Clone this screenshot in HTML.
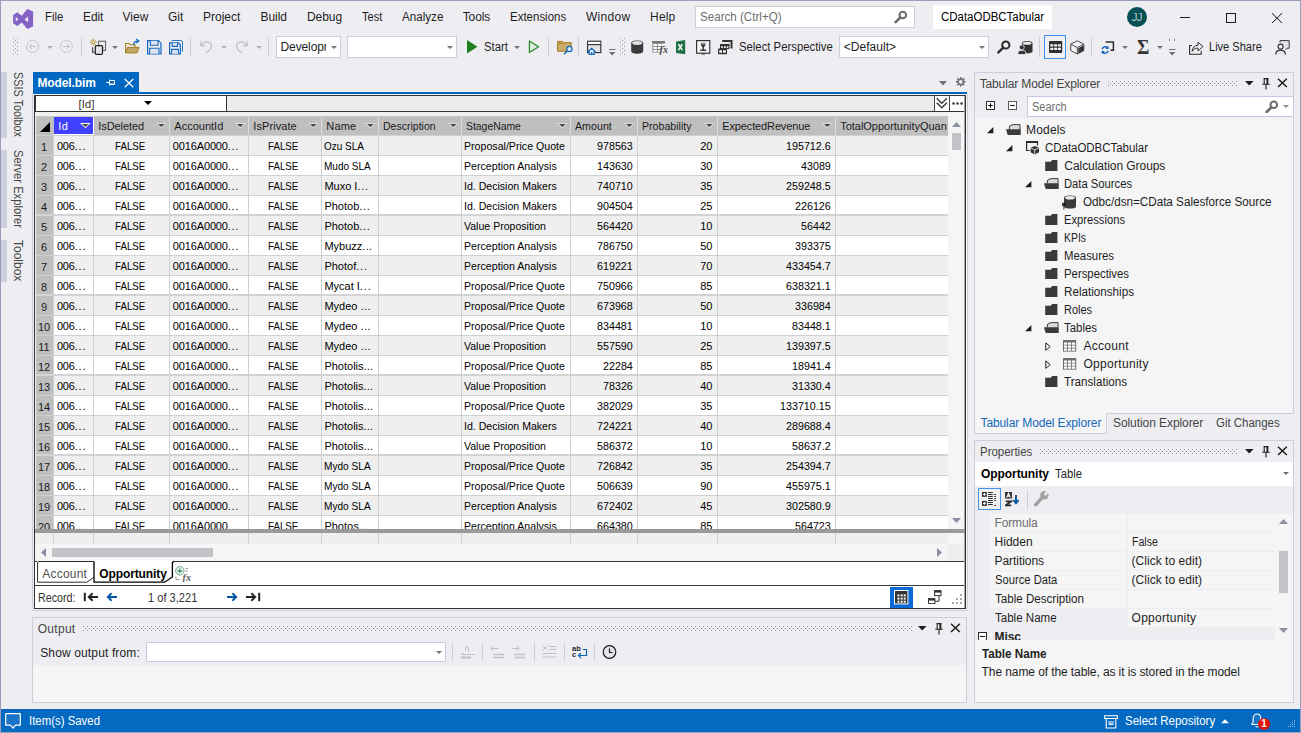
<!DOCTYPE html>
<html lang="en"><head><meta charset="utf-8"><title>Model.bim - CDataODBCTabular</title>
<style>
html,body{margin:0;padding:0;background:#eeeef2}
body{width:1301px;height:733px;overflow:hidden;background:#eeeef2;font-family:"Liberation Sans",sans-serif;font-size:12px;color:#1e1e1e;position:relative}
body div,body svg{position:absolute;box-sizing:border-box}
.t{white-space:pre;font-size:12px;letter-spacing:-0.1px}
.g{white-space:pre;font-size:11px;color:#000}
.grip{background-image:radial-gradient(circle at 0.5px 0.5px,#999 0.6px,transparent 0.7px),radial-gradient(circle at 2.5px 2.5px,#999 0.6px,transparent 0.7px);background-size:4px 4px;}
</style></head>
<body>
<div style="left:0px;top:0px;width:1301px;height:733px;border:1px solid #9b9fb9;pointer-events:none;z-index:50"></div>
<svg style="left:13px;top:9px;" width="21" height="20" viewBox="0 0 21 20"><path d="M14.300 .1 20.100 2.500V17.500L14.300 20 8.800 13.600 4.300 17.100 .1 14.300V6L4.300 3.200 8.800 6.800ZM2.800 8.100V12.500L5.500 10.300ZM15.100 7.500 11.600 10.400 15.100 13.300Z" fill="#8661c5" fill-rule="evenodd"/></svg>
<div class="t" style="left:45.10px;top:9px;height:16px;line-height:16px;letter-spacing:0;transform:scaleX(0.9409);transform-origin:0 0;">File</div>
<div class="t" style="left:83.10px;top:9px;height:16px;line-height:16px;letter-spacing:-0.162px;">Edit</div>
<div class="t" style="left:122.50px;top:9px;height:16px;line-height:16px;letter-spacing:0.001px;">View</div>
<div class="t" style="left:168.10px;top:9px;height:16px;line-height:16px;letter-spacing:-0.072px;">Git</div>
<div class="t" style="left:203.10px;top:9px;height:16px;line-height:16px;letter-spacing:-0.027px;">Project</div>
<div class="t" style="left:260.50px;top:9px;height:16px;line-height:16px;letter-spacing:-0.072px;">Build</div>
<div class="t" style="left:306.90px;top:9px;height:16px;line-height:16px;letter-spacing:-0.044px;">Debug</div>
<div class="t" style="left:362.10px;top:9px;height:16px;line-height:16px;letter-spacing:0;transform:scaleX(0.9175);transform-origin:0 0;">Test</div>
<div class="t" style="left:401.90px;top:9px;height:16px;line-height:16px;letter-spacing:0;transform:scaleX(0.9695);transform-origin:0 0;">Analyze</div>
<div class="t" style="left:462.70px;top:9px;height:16px;line-height:16px;letter-spacing:-0.104px;">Tools</div>
<div class="t" style="left:510.10px;top:9px;height:16px;line-height:16px;letter-spacing:0;transform:scaleX(0.9574);transform-origin:0 0;">Extensions</div>
<div class="t" style="left:585.90px;top:9px;height:16px;line-height:16px;letter-spacing:0.342px;">Window</div>
<div class="t" style="left:650.10px;top:9px;height:16px;line-height:16px;letter-spacing:0.171px;">Help</div>
<div style="left:695px;top:6px;width:220px;height:22px;background:#fff;border:1px solid #cccedb"></div>
<div class="t" style="left:700.40px;top:9px;height:16px;line-height:16px;letter-spacing:0;transform:scaleX(0.9673);transform-origin:0 0;color:#6d6d6d">Search (Ctrl+Q)</div>
<svg style="left:894px;top:10px;" width="14" height="14" viewBox="0 0 14 14"><circle cx="8.800" cy="5" r="3.300" fill="none" stroke="#6b6b6b" stroke-width="2"/><path d="M6.200 7.600 1.600 12.200" stroke="#6b6b6b" stroke-width="2.600" stroke-linecap="round"/></svg>
<div style="left:933px;top:5px;width:119px;height:24px;background:#fff"></div>
<div class="t" style="left:940.80px;top:9px;height:16px;line-height:16px;letter-spacing:0;transform:scaleX(0.9551);transform-origin:0 0;color:#000">CDataODBCTabular</div>
<div style="left:1127px;top:7px;width:20px;height:20px;background:#064f54;border-radius:50%"></div>
<div class="t" style="left:1131.800px;top:9px;height:16px;line-height:16px;font-size:11.500px;color:#b4c9ca;letter-spacing:-0.700px">JJ</div>
<svg style="left:1179px;top:12px;" width="12" height="12" viewBox="0 0 12 12"><path d="M1 5.5H11" stroke="#1a1a1a" stroke-width="1"/></svg>
<svg style="left:1225px;top:12px;" width="12" height="12" viewBox="0 0 12 12"><rect x="1.5" y="1.5" width="9" height="9" fill="none" stroke="#1a1a1a" stroke-width="1"/></svg>
<svg style="left:1271px;top:12px;" width="12" height="12" viewBox="0 0 12 12"><path d="M1 1.2 11 11M11 1.2 1 11" stroke="#1a1a1a" stroke-width="1"/></svg>
<div class="grip" style="left:13px;top:38px;width:5px;height:18px;"></div>
<svg style="left:26px;top:40px;" width="14" height="14" viewBox="0 0 14 14"><circle cx="6.600" cy="6.500" r="6" fill="none" stroke="#c3c3cb" stroke-width="1"/><path d="M9.800 6.500H3.600M6.100 3.900 3.500 6.500l2.600 2.600" fill="none" stroke="#c3c3cb" stroke-width="1"/></svg>
<svg style="left:47px;top:46px;" width="6" height="3" viewBox="0 0 6 3"><path d="M0 0H6L3.0 3Z" fill="#b0b0b8"/></svg>
<svg style="left:60px;top:40px;" width="14" height="14" viewBox="0 0 14 14"><circle cx="6.400" cy="6.500" r="6" fill="none" stroke="#c3c3cb" stroke-width="1"/><path d="M3.200 6.500h6.200M6.900 3.900 9.500 6.500 6.900 9.100" fill="none" stroke="#c3c3cb" stroke-width="1"/></svg>
<div style="left:81px;top:37px;width:1px;height:20px;background:#cccedb"></div>
<svg style="left:90px;top:38px;" width="17" height="17" viewBox="0 0 17 17"><path d="M2.600 9.200V14.300H5.200" fill="none" stroke="#3a3a3a" stroke-width="1.100"/><rect x="8.600" y="3.200" width="7" height="9.200" fill="#ececf0" stroke="#5a5a5a" stroke-width="1"/><rect x="10.500" y="7.500" width="3.500" height="3.500" fill="#cfcfd4"/><rect x="5.300" y="7.600" width="7.200" height="8.800" rx="1.200" fill="#e2e2e6" stroke="#1e1e1e" stroke-width="1.200"/><path d="M3.400 .8V7.800M-.1 4.300H6.900M.9 1.800 5.900 6.800M5.900 1.800 .9 6.800" stroke="#b58b18" stroke-width=".9"/><circle cx="3.400" cy="4.300" r="1.100" fill="#eeeef2"/></svg>
<svg style="left:112px;top:46px;" width="6" height="3" viewBox="0 0 6 3"><path d="M0 0H6L3.0 3Z" fill="#717171"/></svg>
<svg style="left:125px;top:38px;" width="16" height="16" viewBox="0 0 16 16"><path d="M.6 14.800V5.500H4.200L5.400 6.800H10V9" fill="none" stroke="#a47d18" stroke-width="1.100"/><path d="M.7 14.900 2.400 9.400H14.200L11.800 14.900Z" fill="#c3a669" stroke="#a47d18" stroke-width="1"/><path d="M8.600 7.400C8.800 4.600 10.200 3 13 2.900" fill="none" stroke="#1667c0" stroke-width="1.300"/><path d="M11.300 .9 13.800 2.900 11.300 5" fill="none" stroke="#1667c0" stroke-width="1.300"/></svg>
<svg style="left:147px;top:40px;" width="15" height="15" viewBox="0 0 15 15"><path d="M.6 .6H11.400L14 3.200V13.800H.6Z" fill="none" stroke="#1467c1" stroke-width="1.200"/><path d="M3.400 .8V5.200H11V.8" fill="#dde4ef" stroke="#1467c1" stroke-width="1.100"/><path d="M2.600 13.700V8.300H12V13.700" fill="#dde4ef" stroke="#1467c1" stroke-width="1.100"/></svg>
<svg style="left:169px;top:40px;" width="15" height="15" viewBox="0 0 15 15"><path d="M2.600 .5H11.500Q13.500 .5 13.500 2.500V11.800" fill="none" stroke="#1467c1" stroke-width=".9"/><path d="M.6 2.800H9.400L11.400 4.800V13.800H.6Z" fill="none" stroke="#1467c1" stroke-width="1.200"/><path d="M3.200 3V6.400H8.600V3" fill="#dde4ef" stroke="#1467c1" stroke-width="1.100"/><path d="M2.600 13.700V9.400H9.400V13.700" fill="#dde4ef" stroke="#1467c1" stroke-width="1.100"/></svg>
<div style="left:190px;top:37px;width:1px;height:20px;background:#cccedb"></div>
<svg style="left:200px;top:40px;" width="13" height="14" viewBox="0 0 13 14"><path d="M.8 1v4.6h4.6" fill="none" stroke="#bcbcc6" stroke-width="1.1"/><path d="M1.2 5.2C3 2.2 7.4.6 10.3 3.2c2.7 2.6.6 6.6-4.4 10.2" fill="none" stroke="#bcbcc6" stroke-width="1.1"/></svg>
<svg style="left:221px;top:46px;" width="6" height="3" viewBox="0 0 6 3"><path d="M0 0H6L3.0 3Z" fill="#b0b0b8"/></svg>
<svg style="left:235px;top:40px;" width="13" height="14" viewBox="0 0 13 14"><path d="M12.2 1v4.6H7.6" fill="none" stroke="#bcbcc6" stroke-width="1.1"/><path d="M11.8 5.2C10 2.2 5.600 .6 2.7 3.2C0 5.800 2.100 9.8 7.100 13.4" fill="none" stroke="#bcbcc6" stroke-width="1.1"/></svg>
<svg style="left:256px;top:46px;" width="6" height="3" viewBox="0 0 6 3"><path d="M0 0H6L3.0 3Z" fill="#b0b0b8"/></svg>
<div style="left:268px;top:37px;width:1px;height:20px;background:#cccedb"></div>
<div style="left:276px;top:36px;width:65px;height:22px;background:#fff;border:1px solid #cccedb"></div>
<div class="t" style="left:280.5px;top:38.8px;height:16px;line-height:16px;width:45px;overflow:hidden;font-size:12px">Development</div>
<svg style="left:331px;top:46px;" width="6" height="3" viewBox="0 0 6 3"><path d="M0 0H6L3.0 3Z" fill="#717171"/></svg>
<div style="left:347px;top:36px;width:110px;height:22px;background:#fff;border:1px solid #cccedb"></div>
<svg style="left:447px;top:46px;" width="6" height="3" viewBox="0 0 6 3"><path d="M0 0H6L3.0 3Z" fill="#717171"/></svg>
<svg style="left:467px;top:40px;" width="11" height="14" viewBox="0 0 11 14"><path d="M0 0 10.5 6.7 0 13.4Z" fill="#1f801f"/></svg>
<div class="t" style="left:484.20px;top:39px;height:16px;line-height:16px;letter-spacing:0;transform:scaleX(0.9470);transform-origin:0 0;">Start</div>
<svg style="left:514px;top:46px;" width="6" height="3" viewBox="0 0 6 3"><path d="M0 0H6L3.0 3Z" fill="#717171"/></svg>
<svg style="left:528px;top:40px;" width="12" height="14" viewBox="0 0 12 14"><path d="M1.400 .9 10.600 6.700 1.400 12.500Z" fill="#dfe9df" stroke="#228a22" stroke-width="1.200" stroke-linejoin="round"/></svg>
<div style="left:548px;top:37px;width:1px;height:20px;background:#cccedb"></div>
<svg style="left:557px;top:40px;" width="16" height="15" viewBox="0 0 16 15"><path d="M.6 1.400h5l1.200 1.300h7.400V11.300H.6Z" fill="#c9ab6d" stroke="#a47d18" stroke-width="1"/><path d="M.6 3.200H6.500" stroke="#a47d18" stroke-width="1"/><circle cx="12.400" cy="9" r="2.600" fill="#dfe8f4" stroke="#1667c0" stroke-width="1.200"/><path d="M10.400 11 7 14.300" stroke="#1667c0" stroke-width="1.400"/></svg>
<div style="left:578px;top:37px;width:1px;height:20px;background:#cccedb"></div>
<svg style="left:587px;top:40px;" width="15" height="15" viewBox="0 0 15 15"><rect x=".6" y="1.200" width="13.200" height="11.400" fill="#e2e2e6" stroke="#2a2a2a" stroke-width="1.100"/><rect x="1.200" y="2" width="12" height="2" fill="#fff"/><path d="M.6 4.600H13.800" stroke="#2a2a2a" stroke-width="1.100"/><path d="M1 11.800 4.700 8.400 8.400 11.800M2.200 11.200V14.400H7.200V11.200" fill="#f4f6fa" stroke="#1667c0" stroke-width="1.200"/><rect x="4" y="12" width="1.400" height="2" fill="#1667c0"/></svg>
<svg style="left:609px;top:49px;" width="7" height="8" viewBox="0 0 7 8"><path d="M0 .5H6.500" stroke="#717171" stroke-width="1"/><path d="M0 3H6.500L3.250 6.500Z" fill="#717171"/></svg>
<div class="grip" style="left:620px;top:38px;width:5px;height:18px;"></div>
<svg style="left:631px;top:40px;" width="13" height="15" viewBox="0 0 13 15"><path d="M.2 3C.2 -.3 12.200 -.3 12.200 3V11.300C12.200 14.600 .2 14.600 .2 11.300Z" fill="#3a3a3a"/><ellipse cx="6.200" cy="3" rx="5" ry="1.900" fill="#e4e4e8"/></svg>
<svg style="left:652px;top:40px;" width="16" height="16" viewBox="0 0 16 16"><rect x=".3" y="1" width="12.700" height="11.500" fill="#8c8c8c"/><path d="M.3 2H13" stroke="#787878" stroke-width="2"/><path d="M1.300 3.900h3.600v2.200H1.300ZM5.900 3.900h3.600v2.200H5.900ZM1.300 6.900h3.600v2.200H1.300ZM5.900 6.900h3.600v2.200H5.900ZM1.300 9.900h3.600v1.800H1.300ZM5.900 9.900h2.600v1.800H5.900Z" fill="#fff"/><rect x="9.600" y="3.600" width="6" height="11" fill="#eeeef2"/><path d="M10.500 6.500H13.500" stroke="#8c8c8c" stroke-width="1"/><text x="7.600" y="12.800" font-family="Liberation Serif,serif" font-style="italic" font-weight="700" font-size="10" fill="#4a4a4a">fx</text></svg>
<svg style="left:676px;top:40px;" width="10" height="15" viewBox="0 0 10 15"><path d="M0 1.400 9.200 0V14.300L0 12.900Z" fill="#1d7044"/><path d="M2.400 4.200 6.300 10.100M6.300 4.200 2.400 10.100" stroke="#fff" stroke-width="1.500"/></svg>
<svg style="left:696px;top:40px;" width="15" height="15" viewBox="0 0 15 15"><rect x=".6" y=".6" width="13.200" height="12.600" fill="#f1f1f5" stroke="#2a2a2a" stroke-width="1.100"/><path d="M4.800 3.500C4.800 6 6 7 7.200 7.200 8.400 7 9.600 6 9.600 3.500Z" fill="#3a3a3a"/><ellipse cx="7.200" cy="3.500" rx="2.400" ry=".9" fill="#999"/><path d="M7.200 7V9.600M4.200 10.300H10.200" stroke="#3a3a3a" stroke-width="1.500"/><path d="M5.500 13.800H9" stroke="#3a3a3a" stroke-width="1.400"/></svg>
<svg style="left:718px;top:40px;" width="15" height="15" viewBox="0 0 15 15"><path d="M4.200 1H13.600V8.600" fill="none" stroke="#333" stroke-width="1.800"/><path d="M12 3V9M13.600 2.500V8.600" stroke="#333" stroke-width=".8" stroke-dasharray="1 1"/><rect x="2" y="4" width="9.400" height="5" fill="#333"/><path d="M3.200 6.300h1.800v1.600H3.200ZM6 6.300h1.800v1.600H6ZM8.800 6.300h1.600v1.600H8.800Z" fill="#eeeef2"/><rect x="0" y="8.600" width="9" height="5.600" rx=".6" fill="#333"/><path d="M1.200 10.300h2.800v2.400H1.200ZM5 10.300h2.800v2.400H5Z" fill="#f4f4f8"/></svg>
<div class="t" style="left:739.40px;top:39px;height:16px;line-height:16px;letter-spacing:0;transform:scaleX(0.9438);transform-origin:0 0;">Select Perspective</div>
<div style="left:839px;top:36px;width:150px;height:22px;background:#fff;border:1px solid #cccedb"></div>
<div class="t" style="left:843.80px;top:39px;height:16px;line-height:16px;letter-spacing:0.019px;">&lt;Default&gt;</div>
<svg style="left:979px;top:46px;" width="6" height="3" viewBox="0 0 6 3"><path d="M0 0H6L3.0 3Z" fill="#717171"/></svg>
<svg style="left:997px;top:40px;" width="14" height="14" viewBox="0 0 14 14"><circle cx="8.800" cy="5" r="3.600" fill="none" stroke="#2b2b2b" stroke-width="2"/><path d="M6.200 7.600 1.400 12.400" stroke="#2b2b2b" stroke-width="2.400" stroke-linecap="round"/></svg>
<svg style="left:1018px;top:40px;" width="15" height="15" viewBox="0 0 15 15"><path d="M4 3.200C4 .4 14.500.4 14.500 3.200V11.300C14.500 14 4 14 4 11.300Z" fill="#333"/><ellipse cx="9.250" cy="3.200" rx="4.300" ry="1.500" fill="#e9e9ee"/><circle cx="3.800" cy="7.300" r="2.500" fill="#333" stroke="#eeeef2" stroke-width=".8"/><path d="M0 14.500V12c0-2 7.600-2 7.600 0v2.500Z" fill="#333" stroke="#eeeef2" stroke-width=".8"/></svg>
<div style="left:1039px;top:37px;width:1px;height:20px;background:#cccedb"></div>
<div style="left:1044px;top:35px;width:22px;height:24px;background:#f0f0f5;border:1px solid #3a94f0"></div>
<svg style="left:1049px;top:41px;" width="14" height="13" viewBox="0 0 14 13"><rect x="0" y="0" width="13.200" height="12" rx=".8" fill="#2e2e2e"/><path d="M1.300 3.300h3v2.200H1.300ZM5.100 3.300h3v2.200H5.100ZM8.900 3.300h3v2.200H8.900ZM1.300 6.800h3v2.200H1.300ZM5.100 6.800h3v2.200H5.100ZM8.900 6.800h3v2.200H8.900Z" fill="#f2f2f6"/></svg>
<svg style="left:1070px;top:40px;" width="15" height="15" viewBox="0 0 15 15"><path d="M7.300.8 13.800 4.200V10.600L7.300 14 .8 10.600V4.200Z" fill="#f4f4f8" stroke="#4a4a4a" stroke-width="1"/><path d="M.8 4.200 7.300 7.600 13.800 4.200M7.300 7.600V14" fill="none" stroke="#4a4a4a" stroke-width="1"/><path d="M8.300 8.200 13.800 5.300V10.600L8.300 13.500Z" fill="#333"/></svg>
<div style="left:1091px;top:37px;width:1px;height:20px;background:#cccedb"></div>
<svg style="left:1101px;top:40px;" width="14" height="15" viewBox="0 0 14 15"><path d="M4.600 1.900H12.400V10.200H9.400" fill="none" stroke="#2e2e2e" stroke-width="1.500"/><path d="M1.100 9.200A3.300 3.300 0 0 1 6.600 7.800M7.100 10.800A3.300 3.300 0 0 1 1.600 12.200" fill="none" stroke="#0c5fc0" stroke-width="1.400"/><path d="M7.500 5.800V8.900H4.400ZM.7 14.200V11.100H3.800Z" fill="#0c5fc0"/></svg>
<svg style="left:1122px;top:46px;" width="6" height="3" viewBox="0 0 6 3"><path d="M0 0H6L3.0 3Z" fill="#717171"/></svg>
<div class="t" style="left:1137.400px;top:35px;height:24px;line-height:24px;font-size:21px;font-weight:700;font-family:'Liberation Serif',serif;color:#333;letter-spacing:0;transform:scaleX(.9);transform-origin:0 0">&Sigma;</div>
<svg style="left:1157px;top:46px;" width="6" height="3" viewBox="0 0 6 3"><path d="M0 0H6L3.0 3Z" fill="#717171"/></svg>
<svg style="left:1169px;top:38px;" width="7" height="18" viewBox="0 0 7 18"><path d="M.5 .5v2.500M5.500 .5v2.500" stroke="#8a8a8a" stroke-width="1"/><path d="M0 11.500H6.500" stroke="#717171" stroke-width="1"/><path d="M0 14H6.500L3.250 17.500Z" fill="#717171"/></svg>
<svg style="left:1189px;top:40px;" width="15" height="15" viewBox="0 0 15 15"><path d="M3 5.500H.6V14.200H12.200V11" fill="none" stroke="#2e2e2e" stroke-width="1.100"/><path d="M3.200 11.300C3.500 7.600 5.600 5.400 9 5.200V2.200L14 6.600 9 11V8C6.600 8 4.800 9 3.200 11.300Z" fill="#f4f4f8" stroke="#2e2e2e" stroke-width="1" stroke-linejoin="round"/></svg>
<div class="t" style="left:1209.40px;top:39px;height:16px;line-height:16px;letter-spacing:0;transform:scaleX(0.9203);transform-origin:0 0;">Live Share</div>
<svg style="left:1275px;top:40px;" width="15" height="15" viewBox="0 0 15 15"><path d="M5 2.500V.600H14.200V8.200H12L10.500 10" fill="#e2e2e6" stroke="#3a3a3a" stroke-width="1"/><circle cx="5.600" cy="6.600" r="2.500" fill="#f4f4f8" stroke="#2e2e2e" stroke-width="1.100"/><path d="M.8 14.500C.8 8.600 10.400 8.600 10.400 14.500" fill="#e2e2e6" stroke="#2e2e2e" stroke-width="1.100"/></svg>
<div style="left:1px;top:72px;width:6px;height:66px;background:#cccedb"></div>
<div class="t" style="left:25.6px;top:72.0px;height:16px;line-height:16px;transform-origin:0 0;transform:rotate(90deg) scaleX(0.9035);color:#444;letter-spacing:0">SSIS Toolbox</div>
<div style="left:1px;top:150px;width:6px;height:78px;background:#cccedb"></div>
<div class="t" style="left:25.6px;top:150.0px;height:16px;line-height:16px;transform-origin:0 0;transform:rotate(90deg) scaleX(0.9343);color:#444;letter-spacing:0">Server Explorer</div>
<div style="left:1px;top:240px;width:6px;height:42px;background:#cccedb"></div>
<div class="t" style="left:25.6px;top:240.0px;height:16px;line-height:16px;transform-origin:0 0;transform:rotate(90deg) scaleX(1.0000);color:#444;letter-spacing:0">Toolbox</div>
<div style="left:33px;top:72px;width:106px;height:21px;background:#0067c0"></div>
<div style="left:33px;top:92px;width:934px;height:2px;background:#0067c0"></div>
<div class="t" style="left:37.40px;top:75px;height:16px;line-height:16px;letter-spacing:-0.105px;font-weight:700;color:#fff">Model.bim</div>
<svg style="left:106px;top:78px;" width="10" height="10" viewBox="0 0 10 10"><path d="M0 4.500H3.500M3.500 1.500V7.500M3.500 2.500H8.500V6.500H3.500M3.500 6H8.500" fill="none" stroke="#fff" stroke-width="1"/></svg>
<svg style="left:124px;top:78px;" width="10" height="10" viewBox="0 0 10 10"><path d="M.7 1 9.300 9.200M9.300 1 .7 9.200" stroke="#fff" stroke-width="1.200"/></svg>
<svg style="left:939px;top:81px;" width="9" height="5" viewBox="0 0 9 5"><path d="M0 0H8L4 4.500Z" fill="#717171"/></svg>
<svg style="left:956.3px;top:77.3px;" width="9.6" height="9.6" viewBox="0 0 11 11"><g fill="#717171"><rect x="4.500" y="0" width="2" height="2.400" transform="rotate(0 5.500 5.500)"/><rect x="4.500" y="0" width="2" height="2.400" transform="rotate(45 5.500 5.500)"/><rect x="4.500" y="0" width="2" height="2.400" transform="rotate(90 5.500 5.500)"/><rect x="4.500" y="0" width="2" height="2.400" transform="rotate(135 5.500 5.500)"/><rect x="4.500" y="0" width="2" height="2.400" transform="rotate(180 5.500 5.500)"/><rect x="4.500" y="0" width="2" height="2.400" transform="rotate(225 5.500 5.500)"/><rect x="4.500" y="0" width="2" height="2.400" transform="rotate(270 5.500 5.500)"/><rect x="4.500" y="0" width="2" height="2.400" transform="rotate(315 5.500 5.500)"/></g><circle cx="5.500" cy="5.500" r="3" fill="none" stroke="#717171" stroke-width="1.700"/></svg>
<div style="left:33px;top:94px;width:934px;height:1px;background:#f4f4f6"></div>
<div style="left:34px;top:95px;width:932px;height:514px;background:#f0f0f0;border:1px solid #333"></div>
<div style="left:964px;top:96px;width:1px;height:512px;background:#a4a4a4;z-index:3"></div>
<div style="left:966px;top:94px;width:1px;height:516px;background:#f4f4f6"></div>
<div style="left:35px;top:96px;width:1px;height:512px;background:#a8a8a8"></div>
<div style="left:35px;top:96px;width:930px;height:16px;background:#ececec;border-bottom:1px solid #333"></div>
<div style="left:35px;top:96px;width:192px;height:15px;background:#fff;border-right:1px solid #333;border-left:1px solid #333"></div>
<div class="g" style="left:78.40px;top:97px;height:14px;line-height:14px;letter-spacing:0.301px;color:#333">[Id]</div>
<svg style="left:144px;top:101px;" width="8" height="4" viewBox="0 0 8 4"><path d="M0 0H8L4 4Z" fill="#000"/></svg>
<div style="left:934px;top:96px;width:16px;height:15px;background:#fff;border-left:1px solid #444;border-right:1px solid #444"></div>
<svg style="left:936px;top:97px;" width="12" height="13" viewBox="0 0 12 13"><path d="M.7 1.300 5.800 6.300 10.900 1.300M.7 5.800 5.800 10.800 10.900 5.800" fill="none" stroke="#3b3b3b" stroke-width="1.500"/></svg>
<div style="left:950px;top:96px;width:15px;height:15px;background:#fff"></div>
<svg style="left:952px;top:102px;" width="12" height="3" viewBox="0 0 12 3"><circle cx="1.500" cy="1.500" r="1.300" fill="#3b3b3b"/><circle cx="5.500" cy="1.500" r="1.300" fill="#3b3b3b"/><circle cx="9.600" cy="1.500" r="1.300" fill="#3b3b3b"/></svg>
<div style="left:35px;top:112px;width:930px;height:449px;background:#f0f0f0"></div>
<div style="left:36px;top:116px;width:912px;height:1px;background:#c8c8c8"></div>
<div style="left:36px;top:117px;width:18px;height:18px;background:#bfbfbf"></div>
<svg style="left:40px;top:122px;" width="10" height="10" viewBox="0 0 10 10"><path d="M0 10H10V0Z" fill="#000"/></svg>
<div style="left:54px;top:117px;width:39px;height:17px;background:#4040ff"></div>
<div style="left:54px;top:134px;width:40px;height:1px;background:#fff"></div>
<div style="left:93px;top:117px;width:1px;height:18px;background:#fff;z-index:2"></div>
<div class="g" style="left:58.30px;top:119px;height:14px;line-height:14px;letter-spacing:0.412px;color:#fff">Id</div>
<svg style="left:79.8px;top:123px;" width="11" height="6" viewBox="0 0 11 6"><path d="M0 0H10.6L5.3 5.2Z" fill="#ffffff"/><path d="M2 .9H8.6L5.3 4Z" fill="#454545"/></svg>
<div style="left:94px;top:117px;width:75px;height:18px;background:#bfbfbf"></div>
<div class="g" style="left:98.30px;top:119px;height:14px;line-height:14px;letter-spacing:-0.086px;color:#1a1a1a">IsDeleted</div>
<svg style="left:155.8px;top:123px;" width="11" height="6" viewBox="0 0 11 6"><path d="M0 0H10.6L5.3 5.2Z" fill="#e2e2e2"/><path d="M2 .9H8.6L5.3 4Z" fill="#454545"/></svg>
<div style="left:170px;top:117px;width:78px;height:18px;background:#bfbfbf"></div>
<div class="g" style="left:174.30px;top:119px;height:14px;line-height:14px;letter-spacing:0.01px;color:#1a1a1a">AccountId</div>
<svg style="left:234.8px;top:123px;" width="11" height="6" viewBox="0 0 11 6"><path d="M0 0H10.6L5.3 5.2Z" fill="#e2e2e2"/><path d="M2 .9H8.6L5.3 4Z" fill="#454545"/></svg>
<div style="left:249px;top:117px;width:72px;height:18px;background:#bfbfbf"></div>
<div class="g" style="left:253.30px;top:119px;height:14px;line-height:14px;letter-spacing:0.075px;color:#1a1a1a">IsPrivate</div>
<svg style="left:307.8px;top:123px;" width="11" height="6" viewBox="0 0 11 6"><path d="M0 0H10.6L5.3 5.2Z" fill="#e2e2e2"/><path d="M2 .9H8.6L5.3 4Z" fill="#454545"/></svg>
<div style="left:322px;top:117px;width:56px;height:18px;background:#bfbfbf"></div>
<div class="g" style="left:326.30px;top:119px;height:14px;line-height:14px;letter-spacing:0.152px;color:#1a1a1a">Name</div>
<svg style="left:364.8px;top:123px;" width="11" height="6" viewBox="0 0 11 6"><path d="M0 0H10.6L5.3 5.2Z" fill="#e2e2e2"/><path d="M2 .9H8.6L5.3 4Z" fill="#454545"/></svg>
<div style="left:379px;top:117px;width:82px;height:18px;background:#bfbfbf"></div>
<div class="g" style="left:383.30px;top:119px;height:14px;line-height:14px;letter-spacing:0;transform:scaleX(0.9558);transform-origin:0 0;color:#1a1a1a">Description</div>
<svg style="left:447.8px;top:123px;" width="11" height="6" viewBox="0 0 11 6"><path d="M0 0H10.6L5.3 5.2Z" fill="#e2e2e2"/><path d="M2 .9H8.6L5.3 4Z" fill="#454545"/></svg>
<div style="left:462px;top:117px;width:108px;height:18px;background:#bfbfbf"></div>
<div class="g" style="left:466.30px;top:119px;height:14px;line-height:14px;letter-spacing:0;transform:scaleX(0.9450);transform-origin:0 0;color:#1a1a1a">StageName</div>
<svg style="left:556.8px;top:123px;" width="11" height="6" viewBox="0 0 11 6"><path d="M0 0H10.6L5.3 5.2Z" fill="#e2e2e2"/><path d="M2 .9H8.6L5.3 4Z" fill="#454545"/></svg>
<div style="left:571px;top:117px;width:66px;height:18px;background:#bfbfbf"></div>
<div class="g" style="left:575.30px;top:119px;height:14px;line-height:14px;letter-spacing:0;transform:scaleX(0.9704);transform-origin:0 0;color:#1a1a1a">Amount</div>
<svg style="left:623.8px;top:123px;" width="11" height="6" viewBox="0 0 11 6"><path d="M0 0H10.6L5.3 5.2Z" fill="#e2e2e2"/><path d="M2 .9H8.6L5.3 4Z" fill="#454545"/></svg>
<div style="left:638px;top:117px;width:79px;height:18px;background:#bfbfbf"></div>
<div class="g" style="left:642.30px;top:119px;height:14px;line-height:14px;letter-spacing:0;transform:scaleX(0.9638);transform-origin:0 0;color:#1a1a1a">Probability</div>
<svg style="left:703.8px;top:123px;" width="11" height="6" viewBox="0 0 11 6"><path d="M0 0H10.6L5.3 5.2Z" fill="#e2e2e2"/><path d="M2 .9H8.6L5.3 4Z" fill="#454545"/></svg>
<div style="left:718px;top:117px;width:117px;height:18px;background:#bfbfbf"></div>
<div class="g" style="left:722.30px;top:119px;height:14px;line-height:14px;letter-spacing:-0.136px;color:#1a1a1a">ExpectedRevenue</div>
<svg style="left:821.8px;top:123px;" width="11" height="6" viewBox="0 0 11 6"><path d="M0 0H10.6L5.3 5.2Z" fill="#e2e2e2"/><path d="M2 .9H8.6L5.3 4Z" fill="#454545"/></svg>
<div style="left:836px;top:117px;width:112px;height:18px;background:#bfbfbf"></div>
<div class="g" style="left:840.2px;top:119px;height:14px;line-height:14px;width:107.200px;overflow:hidden;color:#1a1a1a;letter-spacing:-0.020px">TotalOpportunityQuantity</div>
<div style="left:36px;top:136px;width:18px;height:19px;background:#bfbfbf"></div>
<div style="left:54px;top:136px;width:894px;height:19px;background:#efefef"></div>
<div class="g" style="left:40.94px;top:140px;height:14px;line-height:14px;letter-spacing:0.0px;color:#1a1a1a">1</div>
<div class="g" style="left:56.90px;top:139px;height:14px;line-height:14px;letter-spacing:-0.14px;">006<span style="letter-spacing:0.73px">...</span></div>
<div class="g" style="left:114.95px;top:139px;height:14px;line-height:14px;letter-spacing:0;transform:scaleX(0.8847);transform-origin:0 0;">FALSE</div>
<div class="g" style="left:172.80px;top:139px;height:14px;line-height:14px;letter-spacing:-0.14px;">0016A0000<span style="letter-spacing:0.636px">...</span></div>
<div class="g" style="left:268.15px;top:139px;height:14px;line-height:14px;letter-spacing:0;transform:scaleX(0.8847);transform-origin:0 0;">FALSE</div>
<div class="g" style="left:324.40px;top:139px;height:14px;line-height:14px;letter-spacing:0;transform:scaleX(0.9062);transform-origin:0 0;">Ozu SLA</div>
<div class="g" style="left:464.10px;top:139px;height:14px;line-height:14px;letter-spacing:0;transform:scaleX(0.9650);transform-origin:0 0;">Proposal/Price Quote</div>
<div class="g" style="left:597.14px;top:139px;height:14px;line-height:14px;letter-spacing:0;transform:scaleX(0.9740);transform-origin:0 0;">978563</div>
<div class="g" style="left:700.15px;top:139px;height:14px;line-height:14px;letter-spacing:0.0px;">20</div>
<div class="g" style="left:785.80px;top:139px;height:14px;line-height:14px;letter-spacing:0;transform:scaleX(0.9740);transform-origin:0 0;">195712.6</div>
<div style="left:36px;top:156px;width:18px;height:19px;background:#bfbfbf"></div>
<div style="left:54px;top:156px;width:894px;height:19px;background:#ffffff"></div>
<div class="g" style="left:40.94px;top:160px;height:14px;line-height:14px;letter-spacing:0.0px;color:#1a1a1a">2</div>
<div class="g" style="left:56.90px;top:159px;height:14px;line-height:14px;letter-spacing:-0.14px;">006<span style="letter-spacing:0.73px">...</span></div>
<div class="g" style="left:114.95px;top:159px;height:14px;line-height:14px;letter-spacing:0;transform:scaleX(0.8847);transform-origin:0 0;">FALSE</div>
<div class="g" style="left:172.80px;top:159px;height:14px;line-height:14px;letter-spacing:-0.14px;">0016A0000<span style="letter-spacing:0.636px">...</span></div>
<div class="g" style="left:268.15px;top:159px;height:14px;line-height:14px;letter-spacing:0;transform:scaleX(0.8847);transform-origin:0 0;">FALSE</div>
<div class="g" style="left:324.40px;top:159px;height:14px;line-height:14px;letter-spacing:0;transform:scaleX(0.9090);transform-origin:0 0;">Mudo SLA</div>
<div class="g" style="left:464.10px;top:159px;height:14px;line-height:14px;letter-spacing:0;transform:scaleX(0.9667);transform-origin:0 0;">Perception Analysis</div>
<div class="g" style="left:597.14px;top:159px;height:14px;line-height:14px;letter-spacing:0;transform:scaleX(0.9740);transform-origin:0 0;">143630</div>
<div class="g" style="left:700.15px;top:159px;height:14px;line-height:14px;letter-spacing:0.0px;">30</div>
<div class="g" style="left:800.70px;top:159px;height:14px;line-height:14px;letter-spacing:0;transform:scaleX(0.9740);transform-origin:0 0;">43089</div>
<div style="left:36px;top:176px;width:18px;height:19px;background:#bfbfbf"></div>
<div style="left:54px;top:176px;width:894px;height:19px;background:#efefef"></div>
<div class="g" style="left:40.94px;top:180px;height:14px;line-height:14px;letter-spacing:0.0px;color:#1a1a1a">3</div>
<div class="g" style="left:56.90px;top:179px;height:14px;line-height:14px;letter-spacing:-0.14px;">006<span style="letter-spacing:0.73px">...</span></div>
<div class="g" style="left:114.95px;top:179px;height:14px;line-height:14px;letter-spacing:0;transform:scaleX(0.8847);transform-origin:0 0;">FALSE</div>
<div class="g" style="left:172.80px;top:179px;height:14px;line-height:14px;letter-spacing:-0.14px;">0016A0000<span style="letter-spacing:0.636px">...</span></div>
<div class="g" style="left:268.15px;top:179px;height:14px;line-height:14px;letter-spacing:0;transform:scaleX(0.8847);transform-origin:0 0;">FALSE</div>
<div class="g" style="left:324.40px;top:179px;height:14px;line-height:14px;letter-spacing:0px;">Muxo I<span style="letter-spacing:0.737px">...</span></div>
<div class="g" style="left:464.10px;top:179px;height:14px;line-height:14px;letter-spacing:0;transform:scaleX(0.9607);transform-origin:0 0;">Id. Decision Makers</div>
<div class="g" style="left:597.14px;top:179px;height:14px;line-height:14px;letter-spacing:0;transform:scaleX(0.9740);transform-origin:0 0;">740710</div>
<div class="g" style="left:700.15px;top:179px;height:14px;line-height:14px;letter-spacing:0.0px;">35</div>
<div class="g" style="left:785.80px;top:179px;height:14px;line-height:14px;letter-spacing:0;transform:scaleX(0.9740);transform-origin:0 0;">259248.5</div>
<div style="left:36px;top:196px;width:18px;height:19px;background:#bfbfbf"></div>
<div style="left:54px;top:196px;width:894px;height:19px;background:#ffffff"></div>
<div class="g" style="left:40.94px;top:200px;height:14px;line-height:14px;letter-spacing:0.0px;color:#1a1a1a">4</div>
<div class="g" style="left:56.90px;top:199px;height:14px;line-height:14px;letter-spacing:-0.14px;">006<span style="letter-spacing:0.73px">...</span></div>
<div class="g" style="left:114.95px;top:199px;height:14px;line-height:14px;letter-spacing:0;transform:scaleX(0.8847);transform-origin:0 0;">FALSE</div>
<div class="g" style="left:172.80px;top:199px;height:14px;line-height:14px;letter-spacing:-0.14px;">0016A0000<span style="letter-spacing:0.636px">...</span></div>
<div class="g" style="left:268.15px;top:199px;height:14px;line-height:14px;letter-spacing:0;transform:scaleX(0.8847);transform-origin:0 0;">FALSE</div>
<div class="g" style="left:324.40px;top:199px;height:14px;line-height:14px;letter-spacing:0px;">Photob<span style="letter-spacing:0.651px">...</span></div>
<div class="g" style="left:464.10px;top:199px;height:14px;line-height:14px;letter-spacing:0;transform:scaleX(0.9607);transform-origin:0 0;">Id. Decision Makers</div>
<div class="g" style="left:597.14px;top:199px;height:14px;line-height:14px;letter-spacing:0;transform:scaleX(0.9740);transform-origin:0 0;">904504</div>
<div class="g" style="left:700.15px;top:199px;height:14px;line-height:14px;letter-spacing:0.0px;">25</div>
<div class="g" style="left:794.74px;top:199px;height:14px;line-height:14px;letter-spacing:0;transform:scaleX(0.9740);transform-origin:0 0;">226126</div>
<div style="left:36px;top:216px;width:18px;height:19px;background:#bfbfbf"></div>
<div style="left:54px;top:216px;width:894px;height:19px;background:#efefef"></div>
<div class="g" style="left:40.94px;top:220px;height:14px;line-height:14px;letter-spacing:0.0px;color:#1a1a1a">5</div>
<div class="g" style="left:56.90px;top:219px;height:14px;line-height:14px;letter-spacing:-0.14px;">006<span style="letter-spacing:0.73px">...</span></div>
<div class="g" style="left:114.95px;top:219px;height:14px;line-height:14px;letter-spacing:0;transform:scaleX(0.8847);transform-origin:0 0;">FALSE</div>
<div class="g" style="left:172.80px;top:219px;height:14px;line-height:14px;letter-spacing:-0.14px;">0016A0000<span style="letter-spacing:0.636px">...</span></div>
<div class="g" style="left:268.15px;top:219px;height:14px;line-height:14px;letter-spacing:0;transform:scaleX(0.8847);transform-origin:0 0;">FALSE</div>
<div class="g" style="left:324.40px;top:219px;height:14px;line-height:14px;letter-spacing:0px;">Photob<span style="letter-spacing:0.651px">...</span></div>
<div class="g" style="left:464.10px;top:219px;height:14px;line-height:14px;letter-spacing:0;transform:scaleX(0.9589);transform-origin:0 0;">Value Proposition</div>
<div class="g" style="left:597.14px;top:219px;height:14px;line-height:14px;letter-spacing:0;transform:scaleX(0.9740);transform-origin:0 0;">564420</div>
<div class="g" style="left:700.15px;top:219px;height:14px;line-height:14px;letter-spacing:0.0px;">10</div>
<div class="g" style="left:800.70px;top:219px;height:14px;line-height:14px;letter-spacing:0;transform:scaleX(0.9740);transform-origin:0 0;">56442</div>
<div style="left:36px;top:236px;width:18px;height:19px;background:#bfbfbf"></div>
<div style="left:54px;top:236px;width:894px;height:19px;background:#ffffff"></div>
<div class="g" style="left:40.94px;top:240px;height:14px;line-height:14px;letter-spacing:0.0px;color:#1a1a1a">6</div>
<div class="g" style="left:56.90px;top:239px;height:14px;line-height:14px;letter-spacing:-0.14px;">006<span style="letter-spacing:0.73px">...</span></div>
<div class="g" style="left:114.95px;top:239px;height:14px;line-height:14px;letter-spacing:0;transform:scaleX(0.8847);transform-origin:0 0;">FALSE</div>
<div class="g" style="left:172.80px;top:239px;height:14px;line-height:14px;letter-spacing:-0.14px;">0016A0000<span style="letter-spacing:0.636px">...</span></div>
<div class="g" style="left:268.15px;top:239px;height:14px;line-height:14px;letter-spacing:0;transform:scaleX(0.8847);transform-origin:0 0;">FALSE</div>
<div class="g" style="left:324.40px;top:239px;height:14px;line-height:14px;letter-spacing:0px;">Mybuzz<span style="letter-spacing:0.341px">...</span></div>
<div class="g" style="left:464.10px;top:239px;height:14px;line-height:14px;letter-spacing:0;transform:scaleX(0.9667);transform-origin:0 0;">Perception Analysis</div>
<div class="g" style="left:597.14px;top:239px;height:14px;line-height:14px;letter-spacing:0;transform:scaleX(0.9740);transform-origin:0 0;">786750</div>
<div class="g" style="left:700.15px;top:239px;height:14px;line-height:14px;letter-spacing:0.0px;">50</div>
<div class="g" style="left:794.74px;top:239px;height:14px;line-height:14px;letter-spacing:0;transform:scaleX(0.9740);transform-origin:0 0;">393375</div>
<div style="left:36px;top:256px;width:18px;height:19px;background:#bfbfbf"></div>
<div style="left:54px;top:256px;width:894px;height:19px;background:#efefef"></div>
<div class="g" style="left:40.94px;top:260px;height:14px;line-height:14px;letter-spacing:0.0px;color:#1a1a1a">7</div>
<div class="g" style="left:56.90px;top:259px;height:14px;line-height:14px;letter-spacing:-0.14px;">006<span style="letter-spacing:0.73px">...</span></div>
<div class="g" style="left:114.95px;top:259px;height:14px;line-height:14px;letter-spacing:0;transform:scaleX(0.8847);transform-origin:0 0;">FALSE</div>
<div class="g" style="left:172.80px;top:259px;height:14px;line-height:14px;letter-spacing:-0.14px;">0016A0000<span style="letter-spacing:0.636px">...</span></div>
<div class="g" style="left:268.15px;top:259px;height:14px;line-height:14px;letter-spacing:0;transform:scaleX(0.8847);transform-origin:0 0;">FALSE</div>
<div class="g" style="left:324.40px;top:259px;height:14px;line-height:14px;letter-spacing:0px;">Photof<span style="letter-spacing:0.839px">...</span></div>
<div class="g" style="left:464.10px;top:259px;height:14px;line-height:14px;letter-spacing:0;transform:scaleX(0.9667);transform-origin:0 0;">Perception Analysis</div>
<div class="g" style="left:597.14px;top:259px;height:14px;line-height:14px;letter-spacing:0;transform:scaleX(0.9740);transform-origin:0 0;">619221</div>
<div class="g" style="left:700.15px;top:259px;height:14px;line-height:14px;letter-spacing:0.0px;">70</div>
<div class="g" style="left:785.80px;top:259px;height:14px;line-height:14px;letter-spacing:0;transform:scaleX(0.9740);transform-origin:0 0;">433454.7</div>
<div style="left:36px;top:276px;width:18px;height:19px;background:#bfbfbf"></div>
<div style="left:54px;top:276px;width:894px;height:19px;background:#ffffff"></div>
<div class="g" style="left:40.94px;top:280px;height:14px;line-height:14px;letter-spacing:0.0px;color:#1a1a1a">8</div>
<div class="g" style="left:56.90px;top:279px;height:14px;line-height:14px;letter-spacing:-0.14px;">006<span style="letter-spacing:0.73px">...</span></div>
<div class="g" style="left:114.95px;top:279px;height:14px;line-height:14px;letter-spacing:0;transform:scaleX(0.8847);transform-origin:0 0;">FALSE</div>
<div class="g" style="left:172.80px;top:279px;height:14px;line-height:14px;letter-spacing:-0.14px;">0016A0000<span style="letter-spacing:0.636px">...</span></div>
<div class="g" style="left:268.15px;top:279px;height:14px;line-height:14px;letter-spacing:0;transform:scaleX(0.8847);transform-origin:0 0;">FALSE</div>
<div class="g" style="left:324.40px;top:279px;height:14px;line-height:14px;letter-spacing:0px;">Mycat I<span style="letter-spacing:0.958px">...</span></div>
<div class="g" style="left:464.10px;top:279px;height:14px;line-height:14px;letter-spacing:0;transform:scaleX(0.9650);transform-origin:0 0;">Proposal/Price Quote</div>
<div class="g" style="left:597.14px;top:279px;height:14px;line-height:14px;letter-spacing:0;transform:scaleX(0.9740);transform-origin:0 0;">750966</div>
<div class="g" style="left:700.15px;top:279px;height:14px;line-height:14px;letter-spacing:0.0px;">85</div>
<div class="g" style="left:785.80px;top:279px;height:14px;line-height:14px;letter-spacing:0;transform:scaleX(0.9740);transform-origin:0 0;">638321.1</div>
<div style="left:36px;top:296px;width:18px;height:19px;background:#bfbfbf"></div>
<div style="left:54px;top:296px;width:894px;height:19px;background:#efefef"></div>
<div class="g" style="left:40.94px;top:300px;height:14px;line-height:14px;letter-spacing:0.0px;color:#1a1a1a">9</div>
<div class="g" style="left:56.90px;top:299px;height:14px;line-height:14px;letter-spacing:-0.14px;">006<span style="letter-spacing:0.73px">...</span></div>
<div class="g" style="left:114.95px;top:299px;height:14px;line-height:14px;letter-spacing:0;transform:scaleX(0.8847);transform-origin:0 0;">FALSE</div>
<div class="g" style="left:172.80px;top:299px;height:14px;line-height:14px;letter-spacing:-0.14px;">0016A0000<span style="letter-spacing:0.636px">...</span></div>
<div class="g" style="left:268.15px;top:299px;height:14px;line-height:14px;letter-spacing:0;transform:scaleX(0.8847);transform-origin:0 0;">FALSE</div>
<div class="g" style="left:324.40px;top:299px;height:14px;line-height:14px;letter-spacing:0px;">Mydeo <span style="letter-spacing:0.45px">...</span></div>
<div class="g" style="left:464.10px;top:299px;height:14px;line-height:14px;letter-spacing:0;transform:scaleX(0.9650);transform-origin:0 0;">Proposal/Price Quote</div>
<div class="g" style="left:597.14px;top:299px;height:14px;line-height:14px;letter-spacing:0;transform:scaleX(0.9740);transform-origin:0 0;">673968</div>
<div class="g" style="left:700.15px;top:299px;height:14px;line-height:14px;letter-spacing:0.0px;">50</div>
<div class="g" style="left:794.74px;top:299px;height:14px;line-height:14px;letter-spacing:0;transform:scaleX(0.9740);transform-origin:0 0;">336984</div>
<div style="left:36px;top:316px;width:18px;height:19px;background:#bfbfbf"></div>
<div style="left:54px;top:316px;width:894px;height:19px;background:#ffffff"></div>
<div class="g" style="left:37.88px;top:320px;height:14px;line-height:14px;letter-spacing:0.0px;color:#1a1a1a">10</div>
<div class="g" style="left:56.90px;top:319px;height:14px;line-height:14px;letter-spacing:-0.14px;">006<span style="letter-spacing:0.73px">...</span></div>
<div class="g" style="left:114.95px;top:319px;height:14px;line-height:14px;letter-spacing:0;transform:scaleX(0.8847);transform-origin:0 0;">FALSE</div>
<div class="g" style="left:172.80px;top:319px;height:14px;line-height:14px;letter-spacing:-0.14px;">0016A0000<span style="letter-spacing:0.636px">...</span></div>
<div class="g" style="left:268.15px;top:319px;height:14px;line-height:14px;letter-spacing:0;transform:scaleX(0.8847);transform-origin:0 0;">FALSE</div>
<div class="g" style="left:324.40px;top:319px;height:14px;line-height:14px;letter-spacing:0px;">Mydeo <span style="letter-spacing:0.45px">...</span></div>
<div class="g" style="left:464.10px;top:319px;height:14px;line-height:14px;letter-spacing:0;transform:scaleX(0.9650);transform-origin:0 0;">Proposal/Price Quote</div>
<div class="g" style="left:597.14px;top:319px;height:14px;line-height:14px;letter-spacing:0;transform:scaleX(0.9740);transform-origin:0 0;">834481</div>
<div class="g" style="left:700.15px;top:319px;height:14px;line-height:14px;letter-spacing:0.0px;">10</div>
<div class="g" style="left:791.77px;top:319px;height:14px;line-height:14px;letter-spacing:0;transform:scaleX(0.9740);transform-origin:0 0;">83448.1</div>
<div style="left:36px;top:336px;width:18px;height:19px;background:#bfbfbf"></div>
<div style="left:54px;top:336px;width:894px;height:19px;background:#efefef"></div>
<div class="g" style="left:38.29px;top:340px;height:14px;line-height:14px;letter-spacing:0.0px;color:#1a1a1a">11</div>
<div class="g" style="left:56.90px;top:339px;height:14px;line-height:14px;letter-spacing:-0.14px;">006<span style="letter-spacing:0.73px">...</span></div>
<div class="g" style="left:114.95px;top:339px;height:14px;line-height:14px;letter-spacing:0;transform:scaleX(0.8847);transform-origin:0 0;">FALSE</div>
<div class="g" style="left:172.80px;top:339px;height:14px;line-height:14px;letter-spacing:-0.14px;">0016A0000<span style="letter-spacing:0.636px">...</span></div>
<div class="g" style="left:268.15px;top:339px;height:14px;line-height:14px;letter-spacing:0;transform:scaleX(0.8847);transform-origin:0 0;">FALSE</div>
<div class="g" style="left:324.40px;top:339px;height:14px;line-height:14px;letter-spacing:0px;">Mydeo <span style="letter-spacing:0.45px">...</span></div>
<div class="g" style="left:464.10px;top:339px;height:14px;line-height:14px;letter-spacing:0;transform:scaleX(0.9589);transform-origin:0 0;">Value Proposition</div>
<div class="g" style="left:597.14px;top:339px;height:14px;line-height:14px;letter-spacing:0;transform:scaleX(0.9740);transform-origin:0 0;">557590</div>
<div class="g" style="left:700.15px;top:339px;height:14px;line-height:14px;letter-spacing:0.0px;">25</div>
<div class="g" style="left:785.80px;top:339px;height:14px;line-height:14px;letter-spacing:0;transform:scaleX(0.9740);transform-origin:0 0;">139397.5</div>
<div style="left:36px;top:356px;width:18px;height:19px;background:#bfbfbf"></div>
<div style="left:54px;top:356px;width:894px;height:19px;background:#ffffff"></div>
<div class="g" style="left:37.88px;top:360px;height:14px;line-height:14px;letter-spacing:0.0px;color:#1a1a1a">12</div>
<div class="g" style="left:56.90px;top:359px;height:14px;line-height:14px;letter-spacing:-0.14px;">006<span style="letter-spacing:0.73px">...</span></div>
<div class="g" style="left:114.95px;top:359px;height:14px;line-height:14px;letter-spacing:0;transform:scaleX(0.8847);transform-origin:0 0;">FALSE</div>
<div class="g" style="left:172.80px;top:359px;height:14px;line-height:14px;letter-spacing:-0.14px;">0016A0000<span style="letter-spacing:0.636px">...</span></div>
<div class="g" style="left:268.15px;top:359px;height:14px;line-height:14px;letter-spacing:0;transform:scaleX(0.8847);transform-origin:0 0;">FALSE</div>
<div class="g" style="left:324.40px;top:359px;height:14px;line-height:14px;letter-spacing:0px;">Photolis<span style="letter-spacing:0.129px">...</span></div>
<div class="g" style="left:464.10px;top:359px;height:14px;line-height:14px;letter-spacing:0;transform:scaleX(0.9650);transform-origin:0 0;">Proposal/Price Quote</div>
<div class="g" style="left:603.10px;top:359px;height:14px;line-height:14px;letter-spacing:0;transform:scaleX(0.9740);transform-origin:0 0;">22284</div>
<div class="g" style="left:700.15px;top:359px;height:14px;line-height:14px;letter-spacing:0.0px;">85</div>
<div class="g" style="left:791.77px;top:359px;height:14px;line-height:14px;letter-spacing:0;transform:scaleX(0.9740);transform-origin:0 0;">18941.4</div>
<div style="left:36px;top:376px;width:18px;height:19px;background:#bfbfbf"></div>
<div style="left:54px;top:376px;width:894px;height:19px;background:#efefef"></div>
<div class="g" style="left:37.88px;top:380px;height:14px;line-height:14px;letter-spacing:0.0px;color:#1a1a1a">13</div>
<div class="g" style="left:56.90px;top:379px;height:14px;line-height:14px;letter-spacing:-0.14px;">006<span style="letter-spacing:0.73px">...</span></div>
<div class="g" style="left:114.95px;top:379px;height:14px;line-height:14px;letter-spacing:0;transform:scaleX(0.8847);transform-origin:0 0;">FALSE</div>
<div class="g" style="left:172.80px;top:379px;height:14px;line-height:14px;letter-spacing:-0.14px;">0016A0000<span style="letter-spacing:0.636px">...</span></div>
<div class="g" style="left:268.15px;top:379px;height:14px;line-height:14px;letter-spacing:0;transform:scaleX(0.8847);transform-origin:0 0;">FALSE</div>
<div class="g" style="left:324.40px;top:379px;height:14px;line-height:14px;letter-spacing:0px;">Photolis<span style="letter-spacing:0.129px">...</span></div>
<div class="g" style="left:464.10px;top:379px;height:14px;line-height:14px;letter-spacing:0;transform:scaleX(0.9589);transform-origin:0 0;">Value Proposition</div>
<div class="g" style="left:603.10px;top:379px;height:14px;line-height:14px;letter-spacing:0;transform:scaleX(0.9740);transform-origin:0 0;">78326</div>
<div class="g" style="left:700.15px;top:379px;height:14px;line-height:14px;letter-spacing:0.0px;">40</div>
<div class="g" style="left:791.77px;top:379px;height:14px;line-height:14px;letter-spacing:0;transform:scaleX(0.9740);transform-origin:0 0;">31330.4</div>
<div style="left:36px;top:396px;width:18px;height:19px;background:#bfbfbf"></div>
<div style="left:54px;top:396px;width:894px;height:19px;background:#ffffff"></div>
<div class="g" style="left:37.88px;top:400px;height:14px;line-height:14px;letter-spacing:0.0px;color:#1a1a1a">14</div>
<div class="g" style="left:56.90px;top:399px;height:14px;line-height:14px;letter-spacing:-0.14px;">006<span style="letter-spacing:0.73px">...</span></div>
<div class="g" style="left:114.95px;top:399px;height:14px;line-height:14px;letter-spacing:0;transform:scaleX(0.8847);transform-origin:0 0;">FALSE</div>
<div class="g" style="left:172.80px;top:399px;height:14px;line-height:14px;letter-spacing:-0.14px;">0016A0000<span style="letter-spacing:0.636px">...</span></div>
<div class="g" style="left:268.15px;top:399px;height:14px;line-height:14px;letter-spacing:0;transform:scaleX(0.8847);transform-origin:0 0;">FALSE</div>
<div class="g" style="left:324.40px;top:399px;height:14px;line-height:14px;letter-spacing:0px;">Photolis<span style="letter-spacing:0.129px">...</span></div>
<div class="g" style="left:464.10px;top:399px;height:14px;line-height:14px;letter-spacing:0;transform:scaleX(0.9650);transform-origin:0 0;">Proposal/Price Quote</div>
<div class="g" style="left:597.14px;top:399px;height:14px;line-height:14px;letter-spacing:0;transform:scaleX(0.9740);transform-origin:0 0;">382029</div>
<div class="g" style="left:700.15px;top:399px;height:14px;line-height:14px;letter-spacing:0.0px;">35</div>
<div class="g" style="left:779.85px;top:399px;height:14px;line-height:14px;letter-spacing:0;transform:scaleX(0.9740);transform-origin:0 0;">133710.15</div>
<div style="left:36px;top:416px;width:18px;height:19px;background:#bfbfbf"></div>
<div style="left:54px;top:416px;width:894px;height:19px;background:#efefef"></div>
<div class="g" style="left:37.88px;top:420px;height:14px;line-height:14px;letter-spacing:0.0px;color:#1a1a1a">15</div>
<div class="g" style="left:56.90px;top:419px;height:14px;line-height:14px;letter-spacing:-0.14px;">006<span style="letter-spacing:0.73px">...</span></div>
<div class="g" style="left:114.95px;top:419px;height:14px;line-height:14px;letter-spacing:0;transform:scaleX(0.8847);transform-origin:0 0;">FALSE</div>
<div class="g" style="left:172.80px;top:419px;height:14px;line-height:14px;letter-spacing:-0.14px;">0016A0000<span style="letter-spacing:0.636px">...</span></div>
<div class="g" style="left:268.15px;top:419px;height:14px;line-height:14px;letter-spacing:0;transform:scaleX(0.8847);transform-origin:0 0;">FALSE</div>
<div class="g" style="left:324.40px;top:419px;height:14px;line-height:14px;letter-spacing:0px;">Photolis<span style="letter-spacing:0.129px">...</span></div>
<div class="g" style="left:464.10px;top:419px;height:14px;line-height:14px;letter-spacing:0;transform:scaleX(0.9607);transform-origin:0 0;">Id. Decision Makers</div>
<div class="g" style="left:597.14px;top:419px;height:14px;line-height:14px;letter-spacing:0;transform:scaleX(0.9740);transform-origin:0 0;">724221</div>
<div class="g" style="left:700.15px;top:419px;height:14px;line-height:14px;letter-spacing:0.0px;">40</div>
<div class="g" style="left:785.80px;top:419px;height:14px;line-height:14px;letter-spacing:0;transform:scaleX(0.9740);transform-origin:0 0;">289688.4</div>
<div style="left:36px;top:436px;width:18px;height:19px;background:#bfbfbf"></div>
<div style="left:54px;top:436px;width:894px;height:19px;background:#ffffff"></div>
<div class="g" style="left:37.88px;top:440px;height:14px;line-height:14px;letter-spacing:0.0px;color:#1a1a1a">16</div>
<div class="g" style="left:56.90px;top:439px;height:14px;line-height:14px;letter-spacing:-0.14px;">006<span style="letter-spacing:0.73px">...</span></div>
<div class="g" style="left:114.95px;top:439px;height:14px;line-height:14px;letter-spacing:0;transform:scaleX(0.8847);transform-origin:0 0;">FALSE</div>
<div class="g" style="left:172.80px;top:439px;height:14px;line-height:14px;letter-spacing:-0.14px;">0016A0000<span style="letter-spacing:0.636px">...</span></div>
<div class="g" style="left:268.15px;top:439px;height:14px;line-height:14px;letter-spacing:0;transform:scaleX(0.8847);transform-origin:0 0;">FALSE</div>
<div class="g" style="left:324.40px;top:439px;height:14px;line-height:14px;letter-spacing:0px;">Photolis<span style="letter-spacing:0.129px">...</span></div>
<div class="g" style="left:464.10px;top:439px;height:14px;line-height:14px;letter-spacing:0;transform:scaleX(0.9589);transform-origin:0 0;">Value Proposition</div>
<div class="g" style="left:597.14px;top:439px;height:14px;line-height:14px;letter-spacing:0;transform:scaleX(0.9740);transform-origin:0 0;">586372</div>
<div class="g" style="left:700.15px;top:439px;height:14px;line-height:14px;letter-spacing:0.0px;">10</div>
<div class="g" style="left:791.77px;top:439px;height:14px;line-height:14px;letter-spacing:0;transform:scaleX(0.9740);transform-origin:0 0;">58637.2</div>
<div style="left:36px;top:456px;width:18px;height:19px;background:#bfbfbf"></div>
<div style="left:54px;top:456px;width:894px;height:19px;background:#efefef"></div>
<div class="g" style="left:37.88px;top:460px;height:14px;line-height:14px;letter-spacing:0.0px;color:#1a1a1a">17</div>
<div class="g" style="left:56.90px;top:459px;height:14px;line-height:14px;letter-spacing:-0.14px;">006<span style="letter-spacing:0.73px">...</span></div>
<div class="g" style="left:114.95px;top:459px;height:14px;line-height:14px;letter-spacing:0;transform:scaleX(0.8847);transform-origin:0 0;">FALSE</div>
<div class="g" style="left:172.80px;top:459px;height:14px;line-height:14px;letter-spacing:-0.14px;">0016A0000<span style="letter-spacing:0.636px">...</span></div>
<div class="g" style="left:268.15px;top:459px;height:14px;line-height:14px;letter-spacing:0;transform:scaleX(0.8847);transform-origin:0 0;">FALSE</div>
<div class="g" style="left:324.40px;top:459px;height:14px;line-height:14px;letter-spacing:0;transform:scaleX(0.9202);transform-origin:0 0;">Mydo SLA</div>
<div class="g" style="left:464.10px;top:459px;height:14px;line-height:14px;letter-spacing:0;transform:scaleX(0.9650);transform-origin:0 0;">Proposal/Price Quote</div>
<div class="g" style="left:597.14px;top:459px;height:14px;line-height:14px;letter-spacing:0;transform:scaleX(0.9740);transform-origin:0 0;">726842</div>
<div class="g" style="left:700.15px;top:459px;height:14px;line-height:14px;letter-spacing:0.0px;">35</div>
<div class="g" style="left:785.80px;top:459px;height:14px;line-height:14px;letter-spacing:0;transform:scaleX(0.9740);transform-origin:0 0;">254394.7</div>
<div style="left:36px;top:476px;width:18px;height:19px;background:#bfbfbf"></div>
<div style="left:54px;top:476px;width:894px;height:19px;background:#ffffff"></div>
<div class="g" style="left:37.88px;top:480px;height:14px;line-height:14px;letter-spacing:0.0px;color:#1a1a1a">18</div>
<div class="g" style="left:56.90px;top:479px;height:14px;line-height:14px;letter-spacing:-0.14px;">006<span style="letter-spacing:0.73px">...</span></div>
<div class="g" style="left:114.95px;top:479px;height:14px;line-height:14px;letter-spacing:0;transform:scaleX(0.8847);transform-origin:0 0;">FALSE</div>
<div class="g" style="left:172.80px;top:479px;height:14px;line-height:14px;letter-spacing:-0.14px;">0016A0000<span style="letter-spacing:0.636px">...</span></div>
<div class="g" style="left:268.15px;top:479px;height:14px;line-height:14px;letter-spacing:0;transform:scaleX(0.8847);transform-origin:0 0;">FALSE</div>
<div class="g" style="left:324.40px;top:479px;height:14px;line-height:14px;letter-spacing:0;transform:scaleX(0.9202);transform-origin:0 0;">Mydo SLA</div>
<div class="g" style="left:464.10px;top:479px;height:14px;line-height:14px;letter-spacing:0;transform:scaleX(0.9650);transform-origin:0 0;">Proposal/Price Quote</div>
<div class="g" style="left:597.14px;top:479px;height:14px;line-height:14px;letter-spacing:0;transform:scaleX(0.9740);transform-origin:0 0;">506639</div>
<div class="g" style="left:700.15px;top:479px;height:14px;line-height:14px;letter-spacing:0.0px;">90</div>
<div class="g" style="left:785.80px;top:479px;height:14px;line-height:14px;letter-spacing:0;transform:scaleX(0.9740);transform-origin:0 0;">455975.1</div>
<div style="left:36px;top:496px;width:18px;height:19px;background:#bfbfbf"></div>
<div style="left:54px;top:496px;width:894px;height:19px;background:#efefef"></div>
<div class="g" style="left:37.88px;top:500px;height:14px;line-height:14px;letter-spacing:0.0px;color:#1a1a1a">19</div>
<div class="g" style="left:56.90px;top:499px;height:14px;line-height:14px;letter-spacing:-0.14px;">006<span style="letter-spacing:0.73px">...</span></div>
<div class="g" style="left:114.95px;top:499px;height:14px;line-height:14px;letter-spacing:0;transform:scaleX(0.8847);transform-origin:0 0;">FALSE</div>
<div class="g" style="left:172.80px;top:499px;height:14px;line-height:14px;letter-spacing:-0.14px;">0016A0000<span style="letter-spacing:0.636px">...</span></div>
<div class="g" style="left:268.15px;top:499px;height:14px;line-height:14px;letter-spacing:0;transform:scaleX(0.8847);transform-origin:0 0;">FALSE</div>
<div class="g" style="left:324.40px;top:499px;height:14px;line-height:14px;letter-spacing:0;transform:scaleX(0.9202);transform-origin:0 0;">Mydo SLA</div>
<div class="g" style="left:464.10px;top:499px;height:14px;line-height:14px;letter-spacing:0;transform:scaleX(0.9667);transform-origin:0 0;">Perception Analysis</div>
<div class="g" style="left:597.14px;top:499px;height:14px;line-height:14px;letter-spacing:0;transform:scaleX(0.9740);transform-origin:0 0;">672402</div>
<div class="g" style="left:700.15px;top:499px;height:14px;line-height:14px;letter-spacing:0.0px;">45</div>
<div class="g" style="left:785.80px;top:499px;height:14px;line-height:14px;letter-spacing:0;transform:scaleX(0.9740);transform-origin:0 0;">302580.9</div>
<div style="left:36px;top:516px;width:18px;height:19px;background:#bfbfbf"></div>
<div style="left:54px;top:516px;width:894px;height:19px;background:#ffffff"></div>
<div class="g" style="left:37.88px;top:520px;height:14px;line-height:14px;letter-spacing:0.0px;color:#1a1a1a">20</div>
<div class="g" style="left:56.90px;top:519px;height:14px;line-height:14px;letter-spacing:-0.14px;">006<span style="letter-spacing:0.73px">...</span></div>
<div class="g" style="left:114.95px;top:519px;height:14px;line-height:14px;letter-spacing:0;transform:scaleX(0.8847);transform-origin:0 0;">FALSE</div>
<div class="g" style="left:172.80px;top:519px;height:14px;line-height:14px;letter-spacing:-0.14px;">0016A0000<span style="letter-spacing:0.636px">...</span></div>
<div class="g" style="left:268.15px;top:519px;height:14px;line-height:14px;letter-spacing:0;transform:scaleX(0.8847);transform-origin:0 0;">FALSE</div>
<div class="g" style="left:324.40px;top:519px;height:14px;line-height:14px;letter-spacing:0px;">Photos<span style="letter-spacing:0.326px">...</span></div>
<div class="g" style="left:464.10px;top:519px;height:14px;line-height:14px;letter-spacing:0;transform:scaleX(0.9667);transform-origin:0 0;">Perception Analysis</div>
<div class="g" style="left:597.14px;top:519px;height:14px;line-height:14px;letter-spacing:0;transform:scaleX(0.9740);transform-origin:0 0;">664380</div>
<div class="g" style="left:700.15px;top:519px;height:14px;line-height:14px;letter-spacing:0.0px;">85</div>
<div class="g" style="left:794.74px;top:519px;height:14px;line-height:14px;letter-spacing:0;transform:scaleX(0.9740);transform-origin:0 0;">564723</div>
<div style="left:36px;top:135px;width:912px;height:1px;background:#d0d0d0"></div>
<div style="left:36px;top:155px;width:912px;height:1px;background:#d0d0d0"></div>
<div style="left:36px;top:175px;width:912px;height:1px;background:#d0d0d0"></div>
<div style="left:36px;top:195px;width:912px;height:1px;background:#d0d0d0"></div>
<div style="left:36px;top:214px;width:912px;height:2px;background:#d3d3d3"></div>
<div style="left:36px;top:235px;width:912px;height:1px;background:#d0d0d0"></div>
<div style="left:36px;top:255px;width:912px;height:1px;background:#d0d0d0"></div>
<div style="left:36px;top:275px;width:912px;height:1px;background:#d0d0d0"></div>
<div style="left:36px;top:294px;width:912px;height:2px;background:#d3d3d3"></div>
<div style="left:36px;top:315px;width:912px;height:1px;background:#d0d0d0"></div>
<div style="left:36px;top:335px;width:912px;height:1px;background:#d0d0d0"></div>
<div style="left:36px;top:355px;width:912px;height:1px;background:#d0d0d0"></div>
<div style="left:36px;top:374px;width:912px;height:2px;background:#d3d3d3"></div>
<div style="left:36px;top:395px;width:912px;height:1px;background:#d0d0d0"></div>
<div style="left:36px;top:415px;width:912px;height:1px;background:#d0d0d0"></div>
<div style="left:36px;top:435px;width:912px;height:1px;background:#d0d0d0"></div>
<div style="left:36px;top:454px;width:912px;height:2px;background:#d3d3d3"></div>
<div style="left:36px;top:475px;width:912px;height:1px;background:#d0d0d0"></div>
<div style="left:36px;top:495px;width:912px;height:1px;background:#d0d0d0"></div>
<div style="left:36px;top:515px;width:912px;height:1px;background:#d0d0d0"></div>
<div style="left:93px;top:117px;width:1px;height:18px;background:#dcdcdc"></div>
<div style="left:93px;top:135px;width:1px;height:409px;background:#d0d0d0"></div>
<div style="left:169px;top:117px;width:1px;height:18px;background:#dcdcdc"></div>
<div style="left:169px;top:135px;width:1px;height:409px;background:#d0d0d0"></div>
<div style="left:248px;top:117px;width:1px;height:18px;background:#dcdcdc"></div>
<div style="left:248px;top:135px;width:1px;height:409px;background:#d0d0d0"></div>
<div style="left:321px;top:117px;width:1px;height:18px;background:#dcdcdc"></div>
<div style="left:321px;top:135px;width:1px;height:409px;background:#d0d0d0"></div>
<div style="left:378px;top:117px;width:1px;height:18px;background:#dcdcdc"></div>
<div style="left:378px;top:135px;width:1px;height:409px;background:#d0d0d0"></div>
<div style="left:461px;top:117px;width:1px;height:18px;background:#dcdcdc"></div>
<div style="left:461px;top:135px;width:1px;height:409px;background:#d0d0d0"></div>
<div style="left:570px;top:117px;width:1px;height:18px;background:#dcdcdc"></div>
<div style="left:570px;top:135px;width:1px;height:409px;background:#d0d0d0"></div>
<div style="left:637px;top:117px;width:1px;height:18px;background:#dcdcdc"></div>
<div style="left:637px;top:135px;width:1px;height:409px;background:#d0d0d0"></div>
<div style="left:717px;top:117px;width:1px;height:18px;background:#dcdcdc"></div>
<div style="left:717px;top:135px;width:1px;height:409px;background:#d0d0d0"></div>
<div style="left:835px;top:117px;width:1px;height:18px;background:#dcdcdc"></div>
<div style="left:835px;top:135px;width:1px;height:409px;background:#d0d0d0"></div>
<div style="left:53px;top:136px;width:1px;height:408px;background:#d0d0d0"></div>
<div style="left:948px;top:112px;width:16px;height:432px;background:#f5f5f5"></div>
<svg style="left:952px;top:122px;" width="9" height="5" viewBox="0 0 9 5"><path d="M0 5H9L4.500 0Z" fill="#8b8fa3"/></svg>
<div style="left:952px;top:133px;width:9px;height:17px;background:#c2c3c9"></div>
<svg style="left:952px;top:518px;" width="9" height="5" viewBox="0 0 9 5"><path d="M0 0H9L4.500 5Z" fill="#8b8fa3"/></svg>
<div style="left:35px;top:529px;width:930px;height:4px;background:#9a9a9a;z-index:4"></div>
<div style="left:35px;top:533px;width:913px;height:11px;background:#efefef"></div>
<div style="left:93px;top:533px;width:1px;height:11px;background:#d0d0d0"></div>
<div style="left:169px;top:533px;width:1px;height:11px;background:#d0d0d0"></div>
<div style="left:248px;top:533px;width:1px;height:11px;background:#d0d0d0"></div>
<div style="left:321px;top:533px;width:1px;height:11px;background:#d0d0d0"></div>
<div style="left:378px;top:533px;width:1px;height:11px;background:#d0d0d0"></div>
<div style="left:461px;top:533px;width:1px;height:11px;background:#d0d0d0"></div>
<div style="left:570px;top:533px;width:1px;height:11px;background:#d0d0d0"></div>
<div style="left:637px;top:533px;width:1px;height:11px;background:#d0d0d0"></div>
<div style="left:717px;top:533px;width:1px;height:11px;background:#d0d0d0"></div>
<div style="left:835px;top:533px;width:1px;height:11px;background:#d0d0d0"></div>
<div style="left:53px;top:533px;width:1px;height:11px;background:#d0d0d0"></div>
<div style="left:35px;top:544px;width:913px;height:17px;background:#f5f5f5"></div>
<div style="left:948px;top:544px;width:17px;height:17px;background:#eeeeee"></div>
<svg style="left:41px;top:548px;" width="5" height="9" viewBox="0 0 5 9"><path d="M5 0V9L0 4.500Z" fill="#8b8fa3"/></svg>
<div style="left:52px;top:548px;width:161px;height:9px;background:#c2c3c9"></div>
<svg style="left:937px;top:548px;" width="5" height="9" viewBox="0 0 5 9"><path d="M0 0V9L5 4.500Z" fill="#8b8fa3"/></svg>
<div style="left:35px;top:561px;width:930px;height:25px;background:#fff;border-top:1px solid #3a3a3a;border-bottom:1px solid #3a3a3a"></div>
<svg style="left:36px;top:560px;" width="140" height="25" viewBox="0 0 140 25"><path d="M1 1H58V3H1Z" fill="#fff"/><path d="M58 .5H137V3H58Z" fill="#fff"/><path d="M1.600 22.200V3Q1.600 1.500 3.100 1.500H57.500" fill="none" stroke="#2b2b2b" stroke-width="1"/><path d="M1.600 22.200H50.800L58 17.200" fill="none" stroke="#2b2b2b" stroke-width="1"/><path d="M58 1.200V22.200H128.600L136.400 17V3Q136.400 1.500 137.900 1.500" fill="none" stroke="#000" stroke-width="1.300"/></svg>
<div class="t" style="left:42.30px;top:566px;height:16px;line-height:16px;letter-spacing:0.207px;color:#505050">Account</div>
<div class="t" style="left:99.20px;top:566px;height:16px;line-height:16px;letter-spacing:-0.096px;font-weight:700;color:#000">Opportunity</div>
<svg style="left:175px;top:566px;" width="16" height="16" viewBox="0 0 16 16"><circle cx="4.800" cy="4.800" r="4.200" fill="#e9f5ee" stroke="#6aa88a" stroke-width="1"/><path d="M4.800 2.300V7.300M2.300 4.800H7.300" stroke="#3c8a62" stroke-width="1.200"/><path d="M10.500 2.500H13M10.500 5H13M1 10.500V13.500H4.500" stroke="#999" stroke-width="1" fill="none"/><text x="7.600" y="15" font-family="Liberation Serif,serif" font-style="italic" font-weight="700" font-size="10" fill="#5a5a5a">fx</text></svg>
<div style="left:35px;top:586px;width:930px;height:22px;background:#fff"></div>
<div class="t" style="left:38.30px;top:590px;height:16px;line-height:16px;letter-spacing:0;transform:scaleX(0.8898);transform-origin:0 0;color:#333">Record:</div>
<svg style="left:83px;top:592px;" width="16" height="10" viewBox="0 0 16 10"><path d="M1.800 .8V9.200" stroke="#222" stroke-width="2"/><path d="M15 5H6M9.600 1.300 5.800 5 9.600 8.700" fill="none" stroke="#222" stroke-width="1.900"/></svg>
<svg style="left:106px;top:592px;" width="12" height="10" viewBox="0 0 12 10"><path d="M11 5H2M5.600 1.300 1.800 5 5.600 8.700" fill="none" stroke="#0a57a8" stroke-width="1.900"/></svg>
<div class="t" style="left:147.50px;top:590px;height:16px;line-height:16px;letter-spacing:0;transform:scaleX(0.9234);transform-origin:0 0;color:#333">1 of 3,221</div>
<svg style="left:226px;top:592px;" width="12" height="10" viewBox="0 0 12 10"><path d="M1 5H10M6.400 1.300 10.200 5 6.400 8.700" fill="none" stroke="#0a57a8" stroke-width="1.900"/></svg>
<svg style="left:245.4px;top:592px;" width="16" height="10" viewBox="0 0 16 10"><path d="M14.200 .8V9.200" stroke="#222" stroke-width="2"/><path d="M1 5H10M6.400 1.300 10.200 5 6.400 8.700" fill="none" stroke="#222" stroke-width="1.900"/></svg>
<div style="left:890px;top:587px;width:23px;height:21px;background:#0a6ad6"></div>
<svg style="left:894px;top:590px;" width="15" height="15" viewBox="0 0 15 15"><rect x=".5" y=".5" width="13.400" height="13.400" fill="#333" stroke="#fff" stroke-width="1"/><g fill="#fff"><rect x="3.4" y="4.4" width="2" height="2"/><rect x="6.6" y="4.4" width="2" height="2"/><rect x="9.7" y="4.4" width="2" height="2"/><rect x="3.4" y="7.6" width="2" height="2"/><rect x="6.6" y="7.6" width="2" height="2"/><rect x="9.7" y="7.6" width="2" height="2"/><rect x="3.4" y="10.7" width="2" height="2"/><rect x="6.6" y="10.7" width="2" height="2"/><rect x="9.7" y="10.7" width="2" height="2"/></g></svg>
<svg style="left:928px;top:590px;" width="14" height="14" viewBox="0 0 14 14"><rect x="6.600" y=".6" width="6.400" height="5" fill="#fff" stroke="#333" stroke-width="1"/><path d="M6.600 1.600H13" stroke="#333" stroke-width="2"/><rect x=".5" y="8.600" width="6.400" height="5" fill="#fff" stroke="#333" stroke-width="1"/><path d="M.5 9.600H6.900" stroke="#333" stroke-width="2"/><path d="M11 5.800V11.300H7" fill="none" stroke="#333" stroke-width="1"/></svg>
<svg style="left:952px;top:594px;" width="11" height="11" viewBox="0 0 11 11"><g fill="#a8a8a8"><rect x="8" y="0" width="2" height="2"/><rect x="4" y="4" width="2" height="2"/><rect x="8" y="4" width="2" height="2"/><rect x="0" y="8" width="2" height="2"/><rect x="4" y="8" width="2" height="2"/><rect x="8" y="8" width="2" height="2"/></g></svg>
<div style="left:32px;top:94px;width:1px;height:517px;background:#cccedb"></div>
<div style="left:967px;top:94px;width:1px;height:517px;background:#cccedb"></div>
<div style="left:33px;top:610px;width:934px;height:1px;background:#cccedb"></div>
<div style="left:974px;top:72px;width:320px;height:342px;background:#eeeef2;border:1px solid #cccedb"></div>
<div class="t" style="left:979.70px;top:76px;height:16px;line-height:16px;letter-spacing:-0.138px;color:#444">Tabular Model Explorer</div>
<div class="grip" style="left:1108px;top:81px;width:129px;height:5px;"></div>
<svg style="left:1245px;top:81px;" width="9" height="5" viewBox="0 0 9 5"><path d="M0 0H8.500L4.250 4.500Z" fill="#1e1e1e"/></svg>
<svg style="left:1262px;top:78px;" width="8" height="12" viewBox="0 0 8 12"><path d="M1.500 .6H6.500M2.200 .6V6M5.800 .6V6M5 .6V6M.3 6.300H7.700M4 6.300V11.500" fill="none" stroke="#1e1e1e" stroke-width="1.100"/></svg>
<svg style="left:1277px;top:78px;" width="11" height="10" viewBox="0 0 11 10"><path d="M1 .8 9.800 9M9.800 .8 1 9" stroke="#1e1e1e" stroke-width="1.500"/></svg>
<svg style="left:986px;top:101px;" width="10" height="10" viewBox="0 0 10 10"><rect x=".5" y=".5" width="8" height="8" fill="#fff" stroke="#2b2b2b" stroke-width="1"/><path d="M2.200 4.500H6.800M4.500 2.200V6.800" stroke="#1a1a1a" stroke-width="1.100"/></svg>
<svg style="left:1008px;top:101px;" width="10" height="10" viewBox="0 0 10 10"><rect x=".5" y=".5" width="8" height="8" fill="#fff" stroke="#5a5a5a" stroke-width="1"/><path d="M2.200 4.500H6.800" stroke="#1a1a1a" stroke-width="1.100"/></svg>
<div style="left:1027px;top:96px;width:267px;height:21px;background:#fff;border:1px solid #c6c9df"></div>
<div class="t" style="left:1032.00px;top:99px;height:16px;line-height:16px;letter-spacing:0;transform:scaleX(0.9124);transform-origin:0 0;color:#6d6d6d">Search</div>
<svg style="left:1265px;top:100px;" width="14" height="13" viewBox="0 0 14 13"><circle cx="8.800" cy="4.800" r="3.300" fill="none" stroke="#6b6b6b" stroke-width="2"/><path d="M6.200 7.400 1.600 12" stroke="#6b6b6b" stroke-width="2.600" stroke-linecap="round"/></svg>
<svg style="left:1283px;top:105px;" width="6" height="3" viewBox="0 0 6 3"><path d="M0 0H6L3 3Z" fill="#8a8a8a"/></svg>
<div style="left:975px;top:118px;width:318px;height:295px;background:#f5f5f5"></div>
<svg style="left:986.8px;top:126.8px;" width="7" height="7" viewBox="0 0 7 7"><path d="M6.400 0V6.300H0Z" fill="#1e1e1e"/></svg>
<svg style="left:1005.7px;top:123.9px;" width="15" height="11" viewBox="0 0 15 11"><path d="M3.400 5.500V2.300L7 .6H14V10.500" fill="#dadada" stroke="#3b3b3b" stroke-width="1"/><path d="M0 5.200H14.500V10.900H1.700Z" fill="#3b3b3b"/></svg>
<div class="t" style="left:1026.10px;top:122px;height:16px;line-height:16px;letter-spacing:0.163px;color:#1e1e1e">Models</div>
<svg style="left:1005.9px;top:144.8px;" width="7" height="7" viewBox="0 0 7 7"><path d="M6.400 0V6.300H0Z" fill="#1e1e1e"/></svg>
<svg style="left:1025.95px;top:141.0px;" width="14" height="14" viewBox="0 0 14 14"><path d="M3.500 9.500H.6V.7H11.500V4.500" fill="#f5f5f5" stroke="#2b2b2b" stroke-width="1.200"/><path d="M.6 1.200H11.500" stroke="#2b2b2b" stroke-width="1.600"/><path d="M8.700 5 13 6.800V11.200L8.700 13.500 4.600 11.200V6.800Z" fill="#333"/><path d="M4.600 6.800 8.700 8.900 13 6.800M8.700 8.900V13.500" stroke="#f5f5f5" stroke-width=".8" fill="none"/></svg>
<div class="t" style="left:1045.23px;top:140px;height:16px;line-height:16px;letter-spacing:0;transform:scaleX(0.9533);transform-origin:0 0;color:#1e1e1e">CDataODBCTabular</div>
<svg style="left:1043.8px;top:160.0px;" width="15" height="11" viewBox="0 0 15 11"><path d="M1.200 1.800H6.600L8.300 0H13.400V11H1.200Z" fill="#3b3b3b"/></svg>
<div class="t" style="left:1064.36px;top:158px;height:16px;line-height:16px;letter-spacing:-0.062px;color:#1e1e1e">Calculation Groups</div>
<svg style="left:1025.0px;top:180.8px;" width="7" height="7" viewBox="0 0 7 7"><path d="M6.400 0V6.300H0Z" fill="#1e1e1e"/></svg>
<svg style="left:1043.8px;top:177.9px;" width="15" height="11" viewBox="0 0 15 11"><path d="M3.400 5.500V2.300L7 .6H14V10.500" fill="#dadada" stroke="#3b3b3b" stroke-width="1"/><path d="M0 5.200H14.500V10.900H1.700Z" fill="#3b3b3b"/></svg>
<div class="t" style="left:1064.36px;top:176px;height:16px;line-height:16px;letter-spacing:0;transform:scaleX(0.9353);transform-origin:0 0;color:#1e1e1e">Data Sources</div>
<svg style="left:1062.45px;top:195.0px;" width="15" height="15" viewBox="0 0 15 15"><path d="M2 2.600C2 -.3 14 -.3 14 2.600V11.400C14 14.300 2 14.300 2 11.400Z" fill="#3b3b3b"/><ellipse cx="8" cy="2.700" rx="5" ry="1.800" fill="#ededed"/><path d="M.4 8.800H3.400V10.600H.4ZM1.900 10.600V14.500" fill="#1e1e1e" stroke="#1e1e1e" stroke-width=".9"/><path d="M.9 7.200V8.800M2.900 7.200V8.800" stroke="#1e1e1e" stroke-width=".7"/></svg>
<div class="t" style="left:1083.49px;top:194px;height:16px;line-height:16px;letter-spacing:0;transform:scaleX(0.9727);transform-origin:0 0;color:#1e1e1e">Odbc/dsn=CData Salesforce Source</div>
<svg style="left:1043.8px;top:214.0px;" width="15" height="11" viewBox="0 0 15 11"><path d="M1.200 1.800H6.600L8.300 0H13.400V11H1.200Z" fill="#3b3b3b"/></svg>
<div class="t" style="left:1064.36px;top:212px;height:16px;line-height:16px;letter-spacing:0;transform:scaleX(0.9331);transform-origin:0 0;color:#1e1e1e">Expressions</div>
<svg style="left:1043.8px;top:232.0px;" width="15" height="11" viewBox="0 0 15 11"><path d="M1.200 1.800H6.600L8.300 0H13.400V11H1.200Z" fill="#3b3b3b"/></svg>
<div class="t" style="left:1064.36px;top:230px;height:16px;line-height:16px;letter-spacing:0;transform:scaleX(0.8681);transform-origin:0 0;color:#1e1e1e">KPIs</div>
<svg style="left:1043.8px;top:250.0px;" width="15" height="11" viewBox="0 0 15 11"><path d="M1.200 1.800H6.600L8.300 0H13.400V11H1.200Z" fill="#3b3b3b"/></svg>
<div class="t" style="left:1064.36px;top:248px;height:16px;line-height:16px;letter-spacing:0;transform:scaleX(0.9490);transform-origin:0 0;color:#1e1e1e">Measures</div>
<svg style="left:1043.8px;top:268.0px;" width="15" height="11" viewBox="0 0 15 11"><path d="M1.200 1.800H6.600L8.300 0H13.400V11H1.200Z" fill="#3b3b3b"/></svg>
<div class="t" style="left:1064.36px;top:266px;height:16px;line-height:16px;letter-spacing:0;transform:scaleX(0.9461);transform-origin:0 0;color:#1e1e1e">Perspectives</div>
<svg style="left:1043.8px;top:286.0px;" width="15" height="11" viewBox="0 0 15 11"><path d="M1.200 1.800H6.600L8.300 0H13.400V11H1.200Z" fill="#3b3b3b"/></svg>
<div class="t" style="left:1064.36px;top:284px;height:16px;line-height:16px;letter-spacing:0;transform:scaleX(0.9716);transform-origin:0 0;color:#1e1e1e">Relationships</div>
<svg style="left:1043.8px;top:304.0px;" width="15" height="11" viewBox="0 0 15 11"><path d="M1.200 1.800H6.600L8.300 0H13.400V11H1.200Z" fill="#3b3b3b"/></svg>
<div class="t" style="left:1064.36px;top:302px;height:16px;line-height:16px;letter-spacing:0;transform:scaleX(0.9124);transform-origin:0 0;color:#1e1e1e">Roles</div>
<svg style="left:1025.0px;top:324.8px;" width="7" height="7" viewBox="0 0 7 7"><path d="M6.400 0V6.300H0Z" fill="#1e1e1e"/></svg>
<svg style="left:1043.8px;top:321.9px;" width="15" height="11" viewBox="0 0 15 11"><path d="M3.400 5.500V2.300L7 .6H14V10.500" fill="#dadada" stroke="#3b3b3b" stroke-width="1"/><path d="M0 5.200H14.500V10.900H1.700Z" fill="#3b3b3b"/></svg>
<div class="t" style="left:1064.36px;top:320px;height:16px;line-height:16px;letter-spacing:0;transform:scaleX(0.9514);transform-origin:0 0;color:#1e1e1e">Tables</div>
<svg style="left:1044.6px;top:341.8px;" width="7" height="10" viewBox="0 0 7 10"><path d="M.8 .9 5.200 4.600 .8 8.300Z" fill="#fff" stroke="#1e1e1e" stroke-width="1"/></svg>
<svg style="left:1062.95px;top:340.2px;" width="14" height="12" viewBox="0 0 14 12"><rect x="0" y="0" width="13.200" height="11.600" fill="#6e6e6e"/><path d="M1 2.600h3.200v2.200H1ZM5 2.600h3.200v2.200H5ZM9 2.600h3.200v2.200H9ZM1 5.600h3.200v2.200H1ZM5 5.600h3.200v2.200H5ZM9 5.600h3.200v2.200H9ZM1 8.600h3.200v2.100H1ZM5 8.600h3.200v2.100H5ZM9 8.600h3.200v2.100H9Z" fill="#fff"/></svg>
<div class="t" style="left:1083.49px;top:338px;height:16px;line-height:16px;letter-spacing:0.273px;color:#1e1e1e">Account</div>
<svg style="left:1044.6px;top:359.8px;" width="7" height="10" viewBox="0 0 7 10"><path d="M.8 .9 5.200 4.600 .8 8.300Z" fill="#fff" stroke="#1e1e1e" stroke-width="1"/></svg>
<svg style="left:1062.95px;top:358.2px;" width="14" height="12" viewBox="0 0 14 12"><rect x="0" y="0" width="13.200" height="11.600" fill="#6e6e6e"/><path d="M1 2.600h3.200v2.200H1ZM5 2.600h3.200v2.200H5ZM9 2.600h3.200v2.200H9ZM1 5.600h3.200v2.200H1ZM5 5.600h3.200v2.200H5ZM9 5.600h3.200v2.200H9ZM1 8.600h3.200v2.100H1ZM5 8.600h3.200v2.100H5ZM9 8.600h3.200v2.100H9Z" fill="#fff"/></svg>
<div class="t" style="left:1083.49px;top:356px;height:16px;line-height:16px;letter-spacing:0.295px;color:#1e1e1e">Opportunity</div>
<svg style="left:1043.8px;top:376.0px;" width="15" height="11" viewBox="0 0 15 11"><path d="M1.200 1.800H6.600L8.300 0H13.400V11H1.200Z" fill="#3b3b3b"/></svg>
<div class="t" style="left:1064.36px;top:374px;height:16px;line-height:16px;letter-spacing:0;transform:scaleX(0.9704);transform-origin:0 0;color:#1e1e1e">Translations</div>
<div style="left:974px;top:413px;width:133px;height:21px;background:#f5f5f5;border:1px solid #cccedb;border-top:none"></div>
<div class="t" style="left:980.60px;top:415px;height:16px;line-height:16px;letter-spacing:-0.124px;color:#1469bc">Tabular Model Explorer</div>
<div class="t" style="left:1113.00px;top:415px;height:16px;line-height:16px;letter-spacing:-0.074px;color:#444">Solution Explorer</div>
<div class="t" style="left:1215.50px;top:415px;height:16px;line-height:16px;letter-spacing:0;transform:scaleX(0.9550);transform-origin:0 0;color:#444">Git Changes</div>
<div style="left:974px;top:440px;width:320px;height:263px;background:#eeeef2;border:1px solid #cccedb"></div>
<div class="t" style="left:979.70px;top:444px;height:16px;line-height:16px;letter-spacing:0;transform:scaleX(0.9561);transform-origin:0 0;color:#444">Properties</div>
<div class="grip" style="left:1040px;top:449px;width:197px;height:5px;"></div>
<svg style="left:1245px;top:449px;" width="9" height="5" viewBox="0 0 9 5"><path d="M0 0H8.500L4.250 4.500Z" fill="#1e1e1e"/></svg>
<svg style="left:1262px;top:446px;" width="8" height="12" viewBox="0 0 8 12"><path d="M1.500 .6H6.500M2.200 .6V6M5.800 .6V6M5 .6V6M.3 6.300H7.700M4 6.300V11.500" fill="none" stroke="#1e1e1e" stroke-width="1.100"/></svg>
<svg style="left:1277px;top:446px;" width="11" height="10" viewBox="0 0 11 10"><path d="M1 .8 9.800 9M9.800 .8 1 9" stroke="#1e1e1e" stroke-width="1.500"/></svg>
<div style="left:975px;top:462px;width:318px;height:24px;background:#fff"></div>
<div class="t" style="left:981.00px;top:466px;height:16px;line-height:16px;letter-spacing:-0.066px;font-weight:700;color:#000">Opportunity</div>
<div class="t" style="left:1055.30px;top:466px;height:16px;line-height:16px;letter-spacing:0;transform:scaleX(0.9377);transform-origin:0 0;color:#1e1e1e">Table</div>
<svg style="left:1283px;top:472px;" width="6" height="3" viewBox="0 0 6 3"><path d="M0 0H6L3 3Z" fill="#717171"/></svg>
<div style="left:978px;top:488px;width:23px;height:22px;background:#f1f0f3;border:1px solid #3a94f0"></div>
<svg style="left:982px;top:492px;" width="15" height="15" viewBox="0 0 15 15"><g fill="#2b2b2b"><rect x="0" y="0" width="4.800" height="4.800"/><rect x="0" y="9" width="4.800" height="4.800"/></g><path d="M1 2.400H3.800M2.400 1V3.800M1 11.400H3.800M2.400 10V12.800" stroke="#fff" stroke-width="1.100"/><path d="M6 0.5H10.800" stroke="#2b2b2b" stroke-width="1"/><path d="M6 2.5H10.800" stroke="#2b2b2b" stroke-width="1"/><path d="M6 4.5H10.800" stroke="#2b2b2b" stroke-width="1"/><path d="M6 6.5H10.800" stroke="#2b2b2b" stroke-width="1"/><path d="M6 8.5H10.800" stroke="#2b2b2b" stroke-width="1"/><path d="M6 10.5H10.800" stroke="#2b2b2b" stroke-width="1"/><path d="M6 12.5H10.800" stroke="#2b2b2b" stroke-width="1"/><g fill="#2b2b2b"><rect x="12.300" y="2" width="1.700" height="1"/><rect x="12.300" y="4" width="1.700" height="1"/><rect x="12.300" y="6" width="1.700" height="1"/><rect x="12.300" y="8" width="1.700" height="1"/><rect x="12.300" y="13" width="1.700" height="1"/></g></svg>
<svg style="left:1005px;top:492px;" width="15" height="15" viewBox="0 0 15 15"><rect x="0" y="0" width="7" height="6.600" fill="#333"/><path d="M1.700 5.600 3.500 1.300 5.300 5.600M2.400 4.100H4.600" fill="none" stroke="#fff" stroke-width="1.100"/><path d="M.8 9.300H6.200L.8 13.300H6.200" fill="none" stroke="#2b2b2b" stroke-width="1.700"/><path d="M11 3V10.500" stroke="#0a5a9c" stroke-width="2"/><path d="M8.300 8 11 11.300 13.700 8" fill="none" stroke="#0a5a9c" stroke-width="1.800"/></svg>
<div style="left:1027px;top:490px;width:1px;height:20px;background:#cccedb"></div>
<svg style="left:1033px;top:490px;" width="17" height="17" viewBox="0 0 17 17"><path d="M2.600 14.800 9.600 7.200" stroke="#a0a0a0" stroke-width="3.400" stroke-linecap="round"/><circle cx="11.400" cy="5.200" r="4.200" fill="#a0a0a0"/><path d="M11.600 5 15.500 .8" stroke="#eeeef2" stroke-width="2.600"/></svg>
<div style="left:990px;top:514px;width:285px;height:126px;background:#f5f5f5"></div>
<div style="left:1275px;top:514px;width:18px;height:126px;background:#f5f5f5"></div>
<div class="t" style="left:994.50px;top:515px;height:16px;line-height:16px;letter-spacing:-0.136px;color:#6d6d6d">Formula</div>
<div style="left:990px;top:532px;width:285px;height:1px;background:#eeeef2"></div>
<div class="t" style="left:994.50px;top:534px;height:16px;line-height:16px;letter-spacing:0.034px;color:#1e1e1e">Hidden</div>
<div class="t" style="left:1131.60px;top:534px;height:16px;line-height:16px;letter-spacing:0;transform:scaleX(0.8792);transform-origin:0 0;color:#1e1e1e">False</div>
<div style="left:990px;top:551px;width:285px;height:1px;background:#eeeef2"></div>
<div class="t" style="left:994.50px;top:553px;height:16px;line-height:16px;letter-spacing:-0.048px;color:#1e1e1e">Partitions</div>
<div class="t" style="left:1131.60px;top:553px;height:16px;line-height:16px;letter-spacing:0.027px;color:#1e1e1e">(Click to edit)</div>
<div style="left:990px;top:570px;width:285px;height:1px;background:#eeeef2"></div>
<div class="t" style="left:994.50px;top:572px;height:16px;line-height:16px;letter-spacing:0;transform:scaleX(0.9340);transform-origin:0 0;color:#1e1e1e">Source Data</div>
<div class="t" style="left:1131.60px;top:572px;height:16px;line-height:16px;letter-spacing:0.027px;color:#1e1e1e">(Click to edit)</div>
<div style="left:990px;top:589px;width:285px;height:1px;background:#eeeef2"></div>
<div class="t" style="left:994.50px;top:591px;height:16px;line-height:16px;letter-spacing:0;transform:scaleX(0.9658);transform-origin:0 0;color:#1e1e1e">Table Description</div>
<div style="left:990px;top:608px;width:285px;height:1px;background:#eeeef2"></div>
<div style="left:975px;top:609px;width:152px;height:18px;background:#eeeef2"></div>
<div class="t" style="left:994.50px;top:610px;height:16px;line-height:16px;letter-spacing:0;transform:scaleX(0.9620);transform-origin:0 0;color:#1e1e1e">Table Name</div>
<div class="t" style="left:1131.60px;top:610px;height:16px;line-height:16px;letter-spacing:0.245px;color:#1e1e1e">Opportunity</div>
<div style="left:990px;top:627px;width:285px;height:1px;background:#eeeef2"></div>
<div style="left:1127px;top:514px;width:1px;height:114px;background:#eeeef2"></div>
<div style="left:975px;top:628px;width:300px;height:11.5px;background:#eeeef2;overflow:hidden"><svg style="left:3px;top:4px" width="9" height="9" viewBox="0 0 9 9"><rect x=".5" y=".5" width="8" height="8" fill="#fff" stroke="#2b2b2b"/><path d="M2 4.500H7" stroke="#1a1a1a"/></svg><div class="t" style="left:19.500px;top:1px;height:16px;line-height:16px;font-weight:700;color:#1e1e1e">Misc</div></div>
<svg style="left:1279px;top:519px;" width="9" height="5" viewBox="0 0 9 5"><path d="M0 5H9L4.500 0Z" fill="#8b8fa3"/></svg>
<div style="left:1279px;top:551px;width:9px;height:42px;background:#c2c3c9"></div>
<svg style="left:1279px;top:628px;" width="9" height="5" viewBox="0 0 9 5"><path d="M0 0H9L4.500 5Z" fill="#8b8fa3"/></svg>
<div style="left:975px;top:640px;width:318px;height:62px;background:#f5f5f5"></div>
<div class="t" style="left:981.60px;top:646px;height:16px;line-height:16px;letter-spacing:0;transform:scaleX(0.9719);transform-origin:0 0;font-weight:700;color:#1e1e1e">Table Name</div>
<div class="t" style="left:981.60px;top:664px;height:16px;line-height:16px;letter-spacing:-0.092px;color:#1e1e1e">The name of the table, as it is stored in the model</div>
<div style="left:32px;top:617px;width:935px;height:86px;background:#eeeef2;border:1px solid #cccedb"></div>
<div class="t" style="left:37.70px;top:621px;height:16px;line-height:16px;letter-spacing:0.294px;color:#444">Output</div>
<div class="grip" style="left:83px;top:626px;width:829px;height:5px;"></div>
<svg style="left:918px;top:626px;" width="9" height="5" viewBox="0 0 9 5"><path d="M0 0H8.500L4.250 4.500Z" fill="#1e1e1e"/></svg>
<svg style="left:935px;top:623px;" width="8" height="12" viewBox="0 0 8 12"><path d="M1.500 .6H6.500M2.200 .6V6M5.800 .6V6M5 .6V6M.3 6.300H7.700M4 6.300V11.500" fill="none" stroke="#1e1e1e" stroke-width="1.100"/></svg>
<svg style="left:950px;top:623px;" width="11" height="10" viewBox="0 0 11 10"><path d="M1 .8 9.800 9M9.800 .8 1 9" stroke="#1e1e1e" stroke-width="1.500"/></svg>
<div class="t" style="left:40.20px;top:645px;height:16px;line-height:16px;letter-spacing:0.138px;color:#1e1e1e">Show output from:</div>
<div style="left:146px;top:642px;width:300px;height:20px;background:#fff;border:1px solid #c6c9df"></div>
<svg style="left:436px;top:651px;" width="6" height="3" viewBox="0 0 6 3"><path d="M0 0H6L3 3Z" fill="#717171"/></svg>
<div style="left:452px;top:643px;width:1px;height:18px;background:#cccedb"></div>
<div style="left:482px;top:643px;width:1px;height:18px;background:#cccedb"></div>
<div style="left:534px;top:643px;width:1px;height:18px;background:#cccedb"></div>
<div style="left:564px;top:643px;width:1px;height:18px;background:#cccedb"></div>
<div style="left:594px;top:643px;width:1px;height:18px;background:#cccedb"></div>
<svg style="left:461px;top:645px;" width="15" height="14" viewBox="0 0 15 14"><path d="M4.500 5.500V2.500A2 2 0 0 1 7.500 2.500V7.500M1 7.500 3 9.500" fill="none" stroke="#c0c0c6" stroke-width="1"/><path d="M0 9.500H14" stroke="#c0c0c6" stroke-width="1"/><path d="M0 12.500H10" stroke="#c0c0c6" stroke-width="2"/></svg>
<svg style="left:490px;top:645px;" width="15" height="14" viewBox="0 0 15 14"><path d="M8.500 3.500H1M3.500 1 1 3.500 3.500 6" fill="none" stroke="#c0c0c6" stroke-width="1"/><path d="M3 9.500H14M3 12.500H14" stroke="#c0c0c6" stroke-width="1.600"/></svg>
<svg style="left:511px;top:645px;" width="15" height="14" viewBox="0 0 15 14"><path d="M.5 3.500H8M5.500 1 8 3.500 5.500 6" fill="none" stroke="#c0c0c6" stroke-width="1"/><path d="M3 9.500H14M3 12.500H14" stroke="#c0c0c6" stroke-width="1.600"/></svg>
<svg style="left:542px;top:645px;" width="15" height="14" viewBox="0 0 15 14"><path d="M.5 .5 5.500 5.500M5.500 .5 .5 5.500" stroke="#c0c0c6" stroke-width="1"/><path d="M7.500 1.500H14.500M7.500 4.500H14.500M.5 8.500H14.500M.5 12H14.500" stroke="#c0c0c6" stroke-width="1"/></svg>
<svg style="left:572px;top:645px;" width="16" height="14" viewBox="0 0 16 14"><text x="0" y="5.800" font-family="Liberation Sans,sans-serif" font-weight="700" font-size="7.500" fill="#1e1e1e">ab</text><text x="0" y="12" font-family="Liberation Sans,sans-serif" font-weight="700" font-size="7.500" fill="#1e1e1e">c</text><path d="M11 4.500H14.500V10.500H6.500M9 8 6.500 10.500 9 13" fill="none" stroke="#0a62b8" stroke-width="1.200"/></svg>
<svg style="left:602px;top:645px;" width="15" height="15" viewBox="0 0 15 15"><circle cx="7.500" cy="7" r="6.300" fill="#e4e4e8" stroke="#1e1e1e" stroke-width="1.200"/><path d="M7.500 3.500V7.500H10.500" fill="none" stroke="#1e1e1e" stroke-width="1.200"/></svg>
<div style="left:33px;top:665px;width:933px;height:37px;background:#f5f5f5"></div>
<div style="left:1px;top:709px;width:1299px;height:23px;background:#0369c1"></div>
<svg style="left:5px;top:713px;" width="17" height="17" viewBox="0 0 17 17"><path d="M.7 .7H15.300V12.200H10.700L8 15 5.300 12.200H.7Z" fill="#1a74c8" stroke="#fff" stroke-width="1.200" stroke-linejoin="round"/></svg>
<div class="t" style="left:29.00px;top:713px;height:16px;line-height:16px;letter-spacing:0;transform:scaleX(0.9504);transform-origin:0 0;color:#fff">Item(s) Saved</div>
<svg style="left:1104px;top:715px;" width="14" height="14" viewBox="0 0 14 14"><path d="M.6 .7H13.400V3.500H.6ZM2.200 3.500V13H11.800V3.500" fill="none" stroke="#fff" stroke-width="1.100"/><path d="M5 6V9.500H9V6M7 6V9.500" fill="none" stroke="#fff" stroke-width="1"/></svg>
<div class="t" style="left:1125.00px;top:713px;height:16px;line-height:16px;letter-spacing:0;transform:scaleX(0.9591);transform-origin:0 0;color:#fff">Select Repository</div>
<svg style="left:1221px;top:719px;" width="8" height="5" viewBox="0 0 8 5"><path d="M0 4.200H8L4 .2Z" fill="#fff"/></svg>
<svg style="left:1251px;top:713px;" width="12" height="15" viewBox="0 0 12 15"><path d="M1 11.500V10.500L2.200 9V5.500C2.200 -.6 9.800 -.6 9.800 5.500V9L11 10.500V11.500Z" fill="#1a74c8" stroke="#fff" stroke-width="1.100"/><path d="M4.500 13A1.600 1.600 0 0 0 7.500 13" fill="none" stroke="#fff" stroke-width="1"/></svg>
<div style="left:1258px;top:718px;width:12px;height:12px;background:#e51400;border-radius:50%"></div>
<div class="t" style="left:1261.300px;top:716px;height:16px;line-height:16px;font-size:10px;font-weight:700;color:#fff;letter-spacing:0">1</div>
<svg style="left:1288px;top:720px;" width="8" height="8" viewBox="0 0 8 8"><g fill="#9cc4ea"><rect x="6" y="0" width="1" height="1"/><rect x="4" y="2" width="1" height="1"/><rect x="6" y="2" width="1" height="1"/><rect x="2" y="4" width="1" height="1"/><rect x="4" y="4" width="1" height="1"/><rect x="6" y="4" width="1" height="1"/><rect x="0" y="6" width="1" height="1"/><rect x="2" y="6" width="1" height="1"/><rect x="4" y="6" width="1" height="1"/><rect x="6" y="6" width="1" height="1"/></g></svg>
</body></html>
